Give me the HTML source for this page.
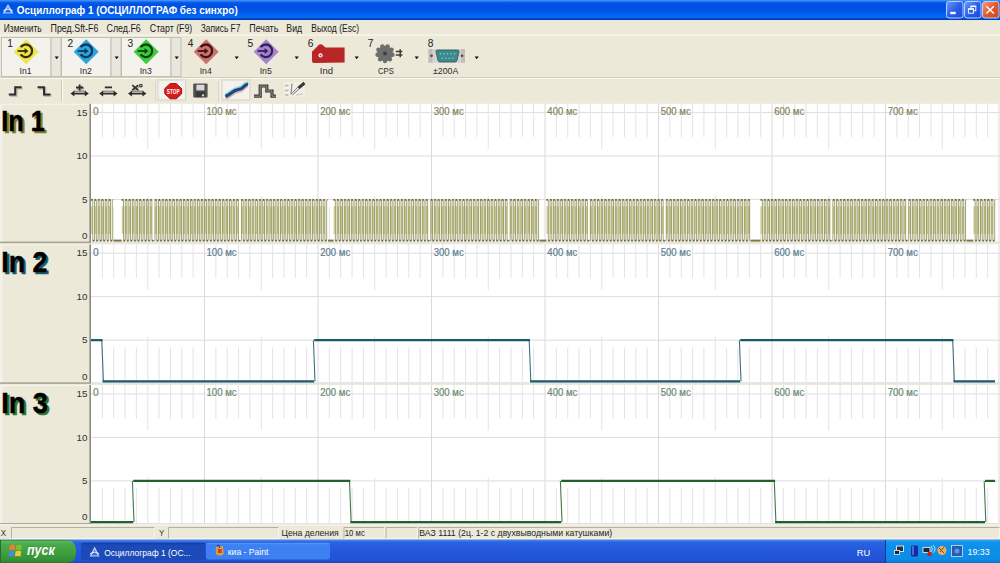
<!DOCTYPE html><html><head><meta charset="utf-8"><style>*{margin:0;padding:0}html,body{width:1000px;height:563px;overflow:hidden;background:#ece9d8}svg{display:block;font-family:"Liberation Sans",sans-serif}</style></head><body>
<svg width="1000" height="563" viewBox="0 0 1000 563">
<defs>
<linearGradient id="gTitle" x1="0" y1="0" x2="0" y2="20" gradientUnits="userSpaceOnUse">
<stop offset="0" stop-color="#4a9cff"/><stop offset="0.06" stop-color="#2a7af5"/><stop offset="0.14" stop-color="#0058e6"/>
<stop offset="0.3" stop-color="#0050e0"/><stop offset="0.55" stop-color="#0055e5"/><stop offset="0.72" stop-color="#0062f4"/>
<stop offset="0.87" stop-color="#066af2"/><stop offset="0.93" stop-color="#0048c4"/><stop offset="1" stop-color="#0038a8"/>
</linearGradient>
<linearGradient id="gBtn" x1="0" y1="0" x2="1" y2="1"><stop offset="0" stop-color="#6a9cff"/><stop offset="0.5" stop-color="#2c5ee8"/><stop offset="1" stop-color="#1c4cd4"/></linearGradient>
<linearGradient id="gClose" x1="0" y1="0" x2="1" y2="1"><stop offset="0" stop-color="#f4a080"/><stop offset="0.5" stop-color="#e2582e"/><stop offset="1" stop-color="#c84820"/></linearGradient>
<linearGradient id="gTask" x1="0" y1="540" x2="0" y2="563" gradientUnits="userSpaceOnUse">
<stop offset="0" stop-color="#4a88f0"/><stop offset="0.1" stop-color="#2a62e0"/><stop offset="0.5" stop-color="#2458dc"/><stop offset="0.9" stop-color="#2052d4"/><stop offset="1" stop-color="#1a44b8"/>
</linearGradient>
<linearGradient id="gStart" x1="0" y1="540" x2="0" y2="563" gradientUnits="userSpaceOnUse">
<stop offset="0" stop-color="#3a7a3a"/><stop offset="0.06" stop-color="#5aba5a"/><stop offset="0.2" stop-color="#48aa48"/><stop offset="0.6" stop-color="#3c9e3c"/><stop offset="0.9" stop-color="#348e34"/><stop offset="1" stop-color="#2a7a2a"/>
</linearGradient>
<linearGradient id="gTray" x1="0" y1="540" x2="0" y2="563" gradientUnits="userSpaceOnUse">
<stop offset="0" stop-color="#2aa8f4"/><stop offset="0.12" stop-color="#0e92ea"/><stop offset="0.85" stop-color="#0c8ce6"/><stop offset="1" stop-color="#0a72cc"/>
</linearGradient>
<filter id="sh" x="-20%" y="-20%" width="140%" height="140%"><feGaussianBlur stdDeviation="0.6"/></filter>
</defs>
<rect x="0" y="0" width="1000" height="563" fill="#ece9d8"/>
<rect x="0" y="0" width="1000" height="20" fill="url(#gTitle)"/>
<rect x="0" y="20" width="1000" height="1" fill="#e2e6e8"/>
<g transform="translate(2.5 3.5)"><path d="M5.5 0.5 L11 10 L0 10Z" fill="#c8dcff" opacity="0.9"/><path d="M5.5 3.5 L8.5 9 L2.5 9Z" fill="#2a68e0"/><path d="M1 7 Q5.5 4 10 7" fill="none" stroke="#e8f0ff" stroke-width="1"/></g>
<text transform="translate(16.81 13.80) scale(0.9022 1)" font-size="11" font-weight="bold" font-style="normal" fill="#ffffff" >Осциллограф 1 (ОСЦИЛЛОГРАФ без синхро)</text>
<rect x="946.5" y="1.5" width="16.5" height="16.5" rx="2.5" fill="url(#gBtn)" stroke="#b4d0ff" stroke-width="1"/>
<rect x="964.5" y="1.5" width="16.5" height="16.5" rx="2.5" fill="url(#gBtn)" stroke="#b4d0ff" stroke-width="1"/>
<rect x="982.5" y="1.5" width="16.5" height="16.5" rx="2.5" fill="url(#gClose)" stroke="#b4d0ff" stroke-width="1"/>
<rect x="950.3" y="11.8" width="5.4" height="2.4" fill="#fff"/>
<rect x="971" y="6.2" width="4.8" height="4.6" fill="none" stroke="#fff" stroke-width="0.9"/><rect x="970.6" y="5.7" width="5.6" height="1.4" fill="#fff"/>
<rect x="968.4" y="8.8" width="5" height="4.4" fill="#2c5ee8" stroke="#fff" stroke-width="0.9"/><rect x="968" y="8.4" width="5.8" height="1.4" fill="#fff"/>
<path d="M986.3 6.2 L993.9 13.5 M993.9 6.2 L986.3 13.5" stroke="#fff" stroke-width="1.5"/>
<text transform="translate(3.82 31.80) scale(0.8410 1)" font-size="10" font-weight="normal" font-style="normal" fill="#1a1a1a" >Изменить</text>
<text transform="translate(50.58 31.80) scale(0.8864 1)" font-size="10" font-weight="normal" font-style="normal" fill="#1a1a1a" >Пред.Sft-F6</text>
<text transform="translate(106.56 31.80) scale(0.8848 1)" font-size="10" font-weight="normal" font-style="normal" fill="#1a1a1a" >След.F6</text>
<text transform="translate(149.86 31.80) scale(0.8785 1)" font-size="10" font-weight="normal" font-style="normal" fill="#1a1a1a" >Старт (F9)</text>
<text transform="translate(200.74 31.80) scale(0.8398 1)" font-size="10" font-weight="normal" font-style="normal" fill="#1a1a1a" >Запись F7</text>
<text transform="translate(249.28 31.80) scale(0.8871 1)" font-size="10" font-weight="normal" font-style="normal" fill="#1a1a1a" >Печать</text>
<text transform="translate(286.29 31.80) scale(0.8759 1)" font-size="10" font-weight="normal" font-style="normal" fill="#1a1a1a" >Вид</text>
<text transform="translate(311.31 31.80) scale(0.8522 1)" font-size="10" font-weight="normal" font-style="normal" fill="#1a1a1a" >Выход (Esc)</text>
<rect x="0" y="34.5" width="1000" height="1" fill="#fbfaf4"/>
<rect x="0" y="77" width="1000" height="1" fill="#d2cfbf"/>
<rect x="0" y="78" width="1000" height="1" fill="#f8f7f0"/>
<rect x="1.5" y="37.5" width="49.5" height="39" fill="#f3f2ec" stroke="#c2bfb0" stroke-width="1"/>
<rect x="51" y="37.5" width="10" height="39" fill="#e9e7dd" stroke="#c2bfb0" stroke-width="1"/>
<text x="7.15" y="47.00" font-size="10.2" font-weight="normal" font-style="normal" fill="#222" >1</text>
<text transform="translate(19.50 73.80) scale(0.9898 1)" font-size="8.8" font-weight="normal" font-style="normal" fill="#2a2a2a" >In1</text>
<path d="M54.6 56.6 L58.8 56.6 L56.7 59.2Z" fill="#111"/>
<path d="M26.2 39.3 L38.7 51.8 L26.2 64.3 L13.7 51.8Z" fill="#ece654"/>
<path d="M20.64 47.19 A6.3 6.3 0 1 1 20.64 54.41" fill="none" stroke="#3a3200" stroke-width="2.3"/>
<path d="M17.60 51.00 L26.40 51.00" stroke="#3a3200" stroke-width="1.8"/>
<path d="M24.60 48.00 L28.40 51.00 L24.60 54.00Z" fill="#3a3200"/>
<rect x="61.5" y="37.5" width="49.5" height="39" fill="#f3f2ec" stroke="#c2bfb0" stroke-width="1"/>
<rect x="111" y="37.5" width="10" height="39" fill="#e9e7dd" stroke="#c2bfb0" stroke-width="1"/>
<text x="67.40" y="47.00" font-size="10.2" font-weight="normal" font-style="normal" fill="#222" >2</text>
<text transform="translate(79.79 73.80) scale(0.9909 1)" font-size="8.8" font-weight="normal" font-style="normal" fill="#2a2a2a" >In2</text>
<path d="M114.6 56.6 L118.8 56.6 L116.7 59.2Z" fill="#111"/>
<path d="M86.2 39.3 L98.7 51.8 L86.2 64.3 L73.7 51.8Z" fill="#2aa4dc"/>
<path d="M80.64 47.19 A6.3 6.3 0 1 1 80.64 54.41" fill="none" stroke="#0c3654" stroke-width="2.3"/>
<path d="M77.60 51.00 L86.40 51.00" stroke="#0c3654" stroke-width="1.8"/>
<path d="M84.60 48.00 L88.40 51.00 L84.60 54.00Z" fill="#0c3654"/>
<rect x="121.5" y="37.5" width="49.5" height="39" fill="#f3f2ec" stroke="#c2bfb0" stroke-width="1"/>
<rect x="171" y="37.5" width="10" height="39" fill="#e9e7dd" stroke="#c2bfb0" stroke-width="1"/>
<text x="127.53" y="47.00" font-size="10.2" font-weight="normal" font-style="normal" fill="#222" >3</text>
<text transform="translate(139.69 73.80) scale(0.9944 1)" font-size="8.8" font-weight="normal" font-style="normal" fill="#2a2a2a" >In3</text>
<path d="M174.6 56.6 L178.8 56.6 L176.7 59.2Z" fill="#111"/>
<path d="M146.2 39.3 L158.7 51.8 L146.2 64.3 L133.7 51.8Z" fill="#3ecc3e"/>
<path d="M140.64 47.19 A6.3 6.3 0 1 1 140.64 54.41" fill="none" stroke="#0c420c" stroke-width="2.3"/>
<path d="M137.60 51.00 L146.40 51.00" stroke="#0c420c" stroke-width="1.8"/>
<path d="M144.60 48.00 L148.40 51.00 L144.60 54.00Z" fill="#0c420c"/>
<text x="187.65" y="47.00" font-size="10.2" font-weight="normal" font-style="normal" fill="#222" >4</text>
<text transform="translate(199.70 73.80) scale(0.9832 1)" font-size="8.8" font-weight="normal" font-style="normal" fill="#2a2a2a" >In4</text>
<path d="M234.6 56.6 L238.8 56.6 L236.7 59.2Z" fill="#111"/>
<path d="M206.2 39.3 L218.7 51.8 L206.2 64.3 L193.7 51.8Z" fill="#cc7070"/>
<path d="M200.64 47.19 A6.3 6.3 0 1 1 200.64 54.41" fill="none" stroke="#3c1414" stroke-width="2.3"/>
<path d="M197.60 51.00 L206.40 51.00" stroke="#3c1414" stroke-width="1.8"/>
<path d="M204.60 48.00 L208.40 51.00 L204.60 54.00Z" fill="#3c1414"/>
<text x="247.46" y="47.00" font-size="10.2" font-weight="normal" font-style="normal" fill="#222" >5</text>
<text transform="translate(259.70 73.80) scale(0.9888 1)" font-size="8.8" font-weight="normal" font-style="normal" fill="#2a2a2a" >In5</text>
<path d="M294.6 56.6 L298.8 56.6 L296.7 59.2Z" fill="#111"/>
<path d="M266.2 39.3 L278.7 51.8 L266.2 64.3 L253.7 51.8Z" fill="#a484cc"/>
<path d="M260.64 47.19 A6.3 6.3 0 1 1 260.64 54.41" fill="none" stroke="#34205a" stroke-width="2.3"/>
<path d="M257.60 51.00 L266.40 51.00" stroke="#34205a" stroke-width="1.8"/>
<path d="M264.60 48.00 L268.40 51.00 L264.60 54.00Z" fill="#34205a"/>
<text x="307.70" y="47.00" font-size="10.2" font-weight="normal" font-style="normal" fill="#222" >6</text>
<text transform="translate(319.83 73.80) scale(1.0759 1)" font-size="8.8" font-weight="normal" font-style="normal" fill="#2a2a2a" >Ind</text>
<path d="M354.6 56.6 L358.8 56.6 L356.7 59.2Z" fill="#111"/>
<text x="367.70" y="47.00" font-size="10.2" font-weight="normal" font-style="normal" fill="#222" >7</text>
<text transform="translate(377.91 73.80) scale(0.8838 1)" font-size="8.8" font-weight="normal" font-style="normal" fill="#2a2a2a" >CPS</text>
<path d="M414.6 56.6 L418.8 56.6 L416.7 59.2Z" fill="#111"/>
<text x="427.76" y="47.00" font-size="10.2" font-weight="normal" font-style="normal" fill="#222" >8</text>
<text x="432.95" y="73.80" font-size="8.8" font-weight="normal" font-style="normal" fill="#2a2a2a" >±200A</text>
<path d="M474.6 56.6 L478.8 56.6 L476.7 59.2Z" fill="#111"/>
<path d="M312 51.5 L318.5 45 Q320 43.8 322 44.6 L325.5 47.6 L344.6 47.6 L344.6 62.5 L314 63 Q312 63 312 61Z" fill="#b82626"/>
<path d="M312.5 51.5 L318.5 45.5" stroke="#e06060" stroke-width="0.8"/>
<circle cx="320.5" cy="55.4" r="2.1" fill="#fff"/><circle cx="320.5" cy="55.4" r="1" fill="#c04040"/>
<g fill="#6e6e6e"><circle cx="385" cy="53.5" r="7.8"/><circle cx="392.48" cy="54.82" r="2.2"/><circle cx="389.89" cy="59.32" r="2.2"/><circle cx="385.00" cy="61.10" r="2.2"/><circle cx="380.11" cy="59.32" r="2.2"/><circle cx="377.52" cy="54.82" r="2.2"/><circle cx="378.42" cy="49.70" r="2.2"/><circle cx="382.40" cy="46.36" r="2.2"/><circle cx="387.60" cy="46.36" r="2.2"/><circle cx="391.58" cy="49.70" r="2.2"/></g><circle cx="385" cy="53.5" r="2.2" fill="#505050"/><circle cx="385" cy="53.5" r="0.9" fill="#2a2a2a"/>
<path d="M395.8 51.6 L402.4 51.6 M395.8 55 L402.4 55 M400.2 49.2 L400.2 57.2" stroke="#3a3a3a" stroke-width="1.5"/>
<rect x="428.5" y="49" width="36.5" height="13.7" fill="#d6d2d2"/>
<rect x="428.5" y="49" width="4" height="13.7" fill="#c4bcbc"/><rect x="461" y="49" width="4" height="13.7" fill="#c4bcbc"/>
<path d="M437.5 50 L457.5 50 Q459.5 50 459 52 L457 60.5 Q456.5 62 455 62 L440 62 Q438.5 62 438 60.5 L436 52 Q435.5 50 437.5 50Z" fill="#3c8a8c" stroke="#2a5a5c" stroke-width="0.8"/>
<circle cx="440.50" cy="53.8" r="0.8" fill="#8ccaca"/>
<circle cx="444.00" cy="53.8" r="0.8" fill="#8ccaca"/>
<circle cx="447.50" cy="53.8" r="0.8" fill="#8ccaca"/>
<circle cx="451.00" cy="53.8" r="0.8" fill="#8ccaca"/>
<circle cx="454.50" cy="53.8" r="0.8" fill="#8ccaca"/>
<circle cx="442.30" cy="58.2" r="0.8" fill="#8ccaca"/>
<circle cx="445.80" cy="58.2" r="0.8" fill="#8ccaca"/>
<circle cx="449.30" cy="58.2" r="0.8" fill="#8ccaca"/>
<circle cx="452.80" cy="58.2" r="0.8" fill="#8ccaca"/>
<circle cx="431.5" cy="55.8" r="1.4" fill="#505050"/><circle cx="462" cy="55.8" r="1.4" fill="#505050"/>
<path d="M8.8 94.4 L15.2 94.4 L15.2 87.2 L21.6 87.2" fill="none" stroke="#9a9890" stroke-width="2.6" transform="translate(1 1)" filter="url(#sh)" opacity="0.7"/>
<path d="M8.8 94.4 L15.2 94.4 L15.2 87.2 L21.6 87.2" fill="none" stroke="#2e2e2e" stroke-width="2"/>
<path d="M37.6 87.2 L44 87.2 L44 94.4 L50.4 94.4" fill="none" stroke="#9a9890" stroke-width="2.6" transform="translate(1 1)" filter="url(#sh)" opacity="0.7"/>
<path d="M37.6 87.2 L44 87.2 L44 94.4 L50.4 94.4" fill="none" stroke="#2e2e2e" stroke-width="2"/>
<rect x="61.1" y="80.5" width="1" height="21" fill="#c9c6b6"/><rect x="62.1" y="80.5" width="1" height="21" fill="#fdfcf6"/>
<rect x="155.5" y="80.5" width="1" height="21" fill="#c9c6b6"/><rect x="156.5" y="80.5" width="1" height="21" fill="#fdfcf6"/>
<path d="M73.4 91.2 L85.80000000000001 91.2" stroke="#707070" stroke-width="1"/>
<path d="M72.9 93.6 L86.30000000000001 93.6" fill="none" stroke="#9a9890" stroke-width="2.4" transform="translate(1 1)" filter="url(#sh)" opacity="0.7"/>
<path d="M72.9 93.6 L86.30000000000001 93.6" fill="none" stroke="#2e2e2e" stroke-width="1.8"/>
<path d="M70.4 93.6 L74.4 90.8 L74.4 96.4Z M88.80000000000001 93.6 L84.80000000000001 90.8 L84.80000000000001 96.4Z" fill="#2a2a2a"/>
<path d="M79.60000000000001 84.6 L79.60000000000001 90.4 M76.00000000000001 87.5 L83.2 87.5" fill="none" stroke="#9a9890" stroke-width="2.4" transform="translate(1 1)" filter="url(#sh)" opacity="0.7"/>
<path d="M79.60000000000001 84.6 L79.60000000000001 90.4 M76.00000000000001 87.5 L83.2 87.5" fill="none" stroke="#2e2e2e" stroke-width="1.8"/>
<path d="M102.2 91.2 L114.60000000000001 91.2" stroke="#707070" stroke-width="1"/>
<path d="M101.7 93.6 L115.10000000000001 93.6" fill="none" stroke="#9a9890" stroke-width="2.4" transform="translate(1 1)" filter="url(#sh)" opacity="0.7"/>
<path d="M101.7 93.6 L115.10000000000001 93.6" fill="none" stroke="#2e2e2e" stroke-width="1.8"/>
<path d="M99.2 93.6 L103.2 90.8 L103.2 96.4Z M117.6 93.6 L113.60000000000001 90.8 L113.60000000000001 96.4Z" fill="#2a2a2a"/>
<path d="M104.80000000000001 87.4 L112.0 87.4" fill="none" stroke="#9a9890" stroke-width="2.4" transform="translate(1 1)" filter="url(#sh)" opacity="0.7"/>
<path d="M104.80000000000001 87.4 L112.0 87.4" fill="none" stroke="#2e2e2e" stroke-width="1.8"/>
<path d="M131 91.2 L143.4 91.2" stroke="#707070" stroke-width="1"/>
<path d="M130.5 93.6 L143.9 93.6" fill="none" stroke="#9a9890" stroke-width="2.4" transform="translate(1 1)" filter="url(#sh)" opacity="0.7"/>
<path d="M130.5 93.6 L143.9 93.6" fill="none" stroke="#2e2e2e" stroke-width="1.8"/>
<path d="M128 93.6 L132 90.8 L132 96.4Z M146.4 93.6 L142.4 90.8 L142.4 96.4Z" fill="#2a2a2a"/>
<path d="M132.2 85.2 L138.2 90.2 M138.2 85.2 L132.2 90.2" fill="none" stroke="#9a9890" stroke-width="2.1" transform="translate(1 1)" filter="url(#sh)" opacity="0.7"/>
<path d="M132.2 85.2 L138.2 90.2 M138.2 85.2 L132.2 90.2" fill="none" stroke="#2e2e2e" stroke-width="1.5"/>
<circle cx="140.9" cy="85.6" r="1.3" fill="none" stroke="#2e2e2e" stroke-width="1.1"/>
<rect x="158" y="80" width="27.6" height="20" fill="#f3f2ec" stroke="#d4d1c4" stroke-width="1"/>
<path d="M170.2 83.6 L176.2 83.6 L181.6 88.6 L181.6 93.8 L176.2 98.8 L170.2 98.8 L164.8 93.8 L164.8 88.6Z" fill="#d81c1c" stroke="#a81010" stroke-width="1" stroke-linejoin="round"/>
<text transform="translate(173.2 94.2) scale(0.62 1)" font-size="7.6" font-weight="bold" fill="#fff" text-anchor="middle">STOP</text>
<rect x="193.2" y="83.6" width="14.4" height="14" rx="1" fill="#525252"/><rect x="196.4" y="84.8" width="8" height="5.6" fill="#d8d8d8"/><rect x="195.6" y="91.6" width="9.6" height="5.6" fill="#3a3a3a"/><rect x="202" y="94.4" width="2" height="2" fill="#e0e0e0"/>
<rect x="218.5" y="80.5" width="1" height="21" fill="#c9c6b6"/><rect x="219.5" y="80.5" width="1" height="21" fill="#fdfcf6"/>
<rect x="222" y="80" width="28" height="20" fill="#f3f2ec" stroke="#d4d1c4" stroke-width="1"/>
<path d="M225.5 96.5 Q229 95 232 92.5 T238.5 89.5 T244 86.5 T248 84.5" fill="none" stroke="#e0b0c0" stroke-width="4.4" transform="translate(0 1.2)"/>
<path d="M225.5 96.5 Q229 95 232 92.5 T238.5 89.5 T244 86.5 T248 84.5" fill="none" stroke="#8ccce0" stroke-width="4.4" transform="translate(0 -0.8)"/>
<path d="M225.5 96.5 Q229 95 232 92.5 T238.5 89.5 T244 86.5 T248 84.5" fill="none" stroke="#1c4a78" stroke-width="3"/>
<path d="M254 96.2 L260.2 96.2 L260.2 86 L266.8 86 L266.8 91 L272 91 L272 96.2 L276 96.2" fill="none" stroke="#3a3a3a" stroke-width="3.2" stroke-linejoin="miter"/>
<path d="M254 96.2 L260.2 96.2 L260.2 86 L266.8 86 L266.8 91 L272 91 L272 96.2 L276 96.2" fill="none" stroke="#a8a69a" stroke-width="0.8"/>
<rect x="284.5" y="82" width="20.5" height="14.5" fill="#f2f1ec" opacity="0.8"/>
<path d="M285 85.5 L288.5 85.5 M285 90.5 L288.5 90.5 M285 95 L288.5 95" stroke="#b4b4b0" stroke-width="1.3"/>
<path d="M292 83.5 L291 94.5" stroke="#8a8a88" stroke-width="1.2"/>
<path d="M291.2 94 L298.5 86.5 M292.5 95 L300 88" stroke="#6a6a6a" stroke-width="0.9"/>
<path d="M298.5 88 L304.5 83" stroke="#3a3a3a" stroke-width="3"/>
<path d="M296 95 L303 94" stroke="#c0c0bc" stroke-width="1"/>
<rect x="91" y="103.8" width="909" height="137.8" fill="#ffffff"/>
<rect x="0" y="103.8" width="89.4" height="1" fill="#f6f5ee"/>
<rect x="0" y="103.8" width="2.5" height="137.8" fill="#f3f2ea"/>
<rect x="0" y="241.6" width="91" height="1.5" fill="#a4a294"/>
<rect x="91" y="241.6" width="909" height="1.5" fill="#e4e2e8"/>
<rect x="91" y="111.90" width="909" height="1" fill="#dcdce2"/>
<rect x="91" y="155.40" width="909" height="1" fill="#dcdce2"/>
<rect x="91" y="198.90" width="909" height="1" fill="#dcdce2"/>
<rect x="101.85" y="103.8" width="1" height="33.40" fill="#e3e3e8"/>
<rect x="101.85" y="206.60" width="1" height="35.00" fill="#e3e3e8"/>
<rect x="113.20" y="103.8" width="1" height="33.40" fill="#e3e3e8"/>
<rect x="113.20" y="206.60" width="1" height="35.00" fill="#e3e3e8"/>
<rect x="124.55" y="103.8" width="1" height="33.40" fill="#e3e3e8"/>
<rect x="124.55" y="206.60" width="1" height="35.00" fill="#e3e3e8"/>
<rect x="135.90" y="103.8" width="1" height="33.40" fill="#e3e3e8"/>
<rect x="135.90" y="206.60" width="1" height="35.00" fill="#e3e3e8"/>
<rect x="147.25" y="103.8" width="1" height="45.20" fill="#e3e3e8"/>
<rect x="147.25" y="195.90" width="1" height="45.70" fill="#e3e3e8"/>
<rect x="158.60" y="103.8" width="1" height="33.40" fill="#e3e3e8"/>
<rect x="158.60" y="206.60" width="1" height="35.00" fill="#e3e3e8"/>
<rect x="169.95" y="103.8" width="1" height="33.40" fill="#e3e3e8"/>
<rect x="169.95" y="206.60" width="1" height="35.00" fill="#e3e3e8"/>
<rect x="181.30" y="103.8" width="1" height="33.40" fill="#e3e3e8"/>
<rect x="181.30" y="206.60" width="1" height="35.00" fill="#e3e3e8"/>
<rect x="192.65" y="103.8" width="1" height="33.40" fill="#e3e3e8"/>
<rect x="192.65" y="206.60" width="1" height="35.00" fill="#e3e3e8"/>
<rect x="204.00" y="103.8" width="1" height="137.80" fill="#d9d9df"/>
<rect x="215.35" y="103.8" width="1" height="33.40" fill="#e3e3e8"/>
<rect x="215.35" y="206.60" width="1" height="35.00" fill="#e3e3e8"/>
<rect x="226.70" y="103.8" width="1" height="33.40" fill="#e3e3e8"/>
<rect x="226.70" y="206.60" width="1" height="35.00" fill="#e3e3e8"/>
<rect x="238.05" y="103.8" width="1" height="33.40" fill="#e3e3e8"/>
<rect x="238.05" y="206.60" width="1" height="35.00" fill="#e3e3e8"/>
<rect x="249.40" y="103.8" width="1" height="33.40" fill="#e3e3e8"/>
<rect x="249.40" y="206.60" width="1" height="35.00" fill="#e3e3e8"/>
<rect x="260.75" y="103.8" width="1" height="45.20" fill="#e3e3e8"/>
<rect x="260.75" y="195.90" width="1" height="45.70" fill="#e3e3e8"/>
<rect x="272.10" y="103.8" width="1" height="33.40" fill="#e3e3e8"/>
<rect x="272.10" y="206.60" width="1" height="35.00" fill="#e3e3e8"/>
<rect x="283.45" y="103.8" width="1" height="33.40" fill="#e3e3e8"/>
<rect x="283.45" y="206.60" width="1" height="35.00" fill="#e3e3e8"/>
<rect x="294.80" y="103.8" width="1" height="33.40" fill="#e3e3e8"/>
<rect x="294.80" y="206.60" width="1" height="35.00" fill="#e3e3e8"/>
<rect x="306.15" y="103.8" width="1" height="33.40" fill="#e3e3e8"/>
<rect x="306.15" y="206.60" width="1" height="35.00" fill="#e3e3e8"/>
<rect x="317.50" y="103.8" width="1" height="137.80" fill="#d9d9df"/>
<rect x="328.85" y="103.8" width="1" height="33.40" fill="#e3e3e8"/>
<rect x="328.85" y="206.60" width="1" height="35.00" fill="#e3e3e8"/>
<rect x="340.20" y="103.8" width="1" height="33.40" fill="#e3e3e8"/>
<rect x="340.20" y="206.60" width="1" height="35.00" fill="#e3e3e8"/>
<rect x="351.55" y="103.8" width="1" height="33.40" fill="#e3e3e8"/>
<rect x="351.55" y="206.60" width="1" height="35.00" fill="#e3e3e8"/>
<rect x="362.90" y="103.8" width="1" height="33.40" fill="#e3e3e8"/>
<rect x="362.90" y="206.60" width="1" height="35.00" fill="#e3e3e8"/>
<rect x="374.25" y="103.8" width="1" height="45.20" fill="#e3e3e8"/>
<rect x="374.25" y="195.90" width="1" height="45.70" fill="#e3e3e8"/>
<rect x="385.60" y="103.8" width="1" height="33.40" fill="#e3e3e8"/>
<rect x="385.60" y="206.60" width="1" height="35.00" fill="#e3e3e8"/>
<rect x="396.95" y="103.8" width="1" height="33.40" fill="#e3e3e8"/>
<rect x="396.95" y="206.60" width="1" height="35.00" fill="#e3e3e8"/>
<rect x="408.30" y="103.8" width="1" height="33.40" fill="#e3e3e8"/>
<rect x="408.30" y="206.60" width="1" height="35.00" fill="#e3e3e8"/>
<rect x="419.65" y="103.8" width="1" height="33.40" fill="#e3e3e8"/>
<rect x="419.65" y="206.60" width="1" height="35.00" fill="#e3e3e8"/>
<rect x="431.00" y="103.8" width="1" height="137.80" fill="#d9d9df"/>
<rect x="442.35" y="103.8" width="1" height="33.40" fill="#e3e3e8"/>
<rect x="442.35" y="206.60" width="1" height="35.00" fill="#e3e3e8"/>
<rect x="453.70" y="103.8" width="1" height="33.40" fill="#e3e3e8"/>
<rect x="453.70" y="206.60" width="1" height="35.00" fill="#e3e3e8"/>
<rect x="465.05" y="103.8" width="1" height="33.40" fill="#e3e3e8"/>
<rect x="465.05" y="206.60" width="1" height="35.00" fill="#e3e3e8"/>
<rect x="476.40" y="103.8" width="1" height="33.40" fill="#e3e3e8"/>
<rect x="476.40" y="206.60" width="1" height="35.00" fill="#e3e3e8"/>
<rect x="487.75" y="103.8" width="1" height="45.20" fill="#e3e3e8"/>
<rect x="487.75" y="195.90" width="1" height="45.70" fill="#e3e3e8"/>
<rect x="499.10" y="103.8" width="1" height="33.40" fill="#e3e3e8"/>
<rect x="499.10" y="206.60" width="1" height="35.00" fill="#e3e3e8"/>
<rect x="510.45" y="103.8" width="1" height="33.40" fill="#e3e3e8"/>
<rect x="510.45" y="206.60" width="1" height="35.00" fill="#e3e3e8"/>
<rect x="521.80" y="103.8" width="1" height="33.40" fill="#e3e3e8"/>
<rect x="521.80" y="206.60" width="1" height="35.00" fill="#e3e3e8"/>
<rect x="533.15" y="103.8" width="1" height="33.40" fill="#e3e3e8"/>
<rect x="533.15" y="206.60" width="1" height="35.00" fill="#e3e3e8"/>
<rect x="544.50" y="103.8" width="1" height="137.80" fill="#d9d9df"/>
<rect x="555.85" y="103.8" width="1" height="33.40" fill="#e3e3e8"/>
<rect x="555.85" y="206.60" width="1" height="35.00" fill="#e3e3e8"/>
<rect x="567.20" y="103.8" width="1" height="33.40" fill="#e3e3e8"/>
<rect x="567.20" y="206.60" width="1" height="35.00" fill="#e3e3e8"/>
<rect x="578.55" y="103.8" width="1" height="33.40" fill="#e3e3e8"/>
<rect x="578.55" y="206.60" width="1" height="35.00" fill="#e3e3e8"/>
<rect x="589.90" y="103.8" width="1" height="33.40" fill="#e3e3e8"/>
<rect x="589.90" y="206.60" width="1" height="35.00" fill="#e3e3e8"/>
<rect x="601.25" y="103.8" width="1" height="45.20" fill="#e3e3e8"/>
<rect x="601.25" y="195.90" width="1" height="45.70" fill="#e3e3e8"/>
<rect x="612.60" y="103.8" width="1" height="33.40" fill="#e3e3e8"/>
<rect x="612.60" y="206.60" width="1" height="35.00" fill="#e3e3e8"/>
<rect x="623.95" y="103.8" width="1" height="33.40" fill="#e3e3e8"/>
<rect x="623.95" y="206.60" width="1" height="35.00" fill="#e3e3e8"/>
<rect x="635.30" y="103.8" width="1" height="33.40" fill="#e3e3e8"/>
<rect x="635.30" y="206.60" width="1" height="35.00" fill="#e3e3e8"/>
<rect x="646.65" y="103.8" width="1" height="33.40" fill="#e3e3e8"/>
<rect x="646.65" y="206.60" width="1" height="35.00" fill="#e3e3e8"/>
<rect x="658.00" y="103.8" width="1" height="137.80" fill="#d9d9df"/>
<rect x="669.35" y="103.8" width="1" height="33.40" fill="#e3e3e8"/>
<rect x="669.35" y="206.60" width="1" height="35.00" fill="#e3e3e8"/>
<rect x="680.70" y="103.8" width="1" height="33.40" fill="#e3e3e8"/>
<rect x="680.70" y="206.60" width="1" height="35.00" fill="#e3e3e8"/>
<rect x="692.05" y="103.8" width="1" height="33.40" fill="#e3e3e8"/>
<rect x="692.05" y="206.60" width="1" height="35.00" fill="#e3e3e8"/>
<rect x="703.40" y="103.8" width="1" height="33.40" fill="#e3e3e8"/>
<rect x="703.40" y="206.60" width="1" height="35.00" fill="#e3e3e8"/>
<rect x="714.75" y="103.8" width="1" height="45.20" fill="#e3e3e8"/>
<rect x="714.75" y="195.90" width="1" height="45.70" fill="#e3e3e8"/>
<rect x="726.10" y="103.8" width="1" height="33.40" fill="#e3e3e8"/>
<rect x="726.10" y="206.60" width="1" height="35.00" fill="#e3e3e8"/>
<rect x="737.45" y="103.8" width="1" height="33.40" fill="#e3e3e8"/>
<rect x="737.45" y="206.60" width="1" height="35.00" fill="#e3e3e8"/>
<rect x="748.80" y="103.8" width="1" height="33.40" fill="#e3e3e8"/>
<rect x="748.80" y="206.60" width="1" height="35.00" fill="#e3e3e8"/>
<rect x="760.15" y="103.8" width="1" height="33.40" fill="#e3e3e8"/>
<rect x="760.15" y="206.60" width="1" height="35.00" fill="#e3e3e8"/>
<rect x="771.50" y="103.8" width="1" height="137.80" fill="#d9d9df"/>
<rect x="782.85" y="103.8" width="1" height="33.40" fill="#e3e3e8"/>
<rect x="782.85" y="206.60" width="1" height="35.00" fill="#e3e3e8"/>
<rect x="794.20" y="103.8" width="1" height="33.40" fill="#e3e3e8"/>
<rect x="794.20" y="206.60" width="1" height="35.00" fill="#e3e3e8"/>
<rect x="805.55" y="103.8" width="1" height="33.40" fill="#e3e3e8"/>
<rect x="805.55" y="206.60" width="1" height="35.00" fill="#e3e3e8"/>
<rect x="816.90" y="103.8" width="1" height="33.40" fill="#e3e3e8"/>
<rect x="816.90" y="206.60" width="1" height="35.00" fill="#e3e3e8"/>
<rect x="828.25" y="103.8" width="1" height="45.20" fill="#e3e3e8"/>
<rect x="828.25" y="195.90" width="1" height="45.70" fill="#e3e3e8"/>
<rect x="839.60" y="103.8" width="1" height="33.40" fill="#e3e3e8"/>
<rect x="839.60" y="206.60" width="1" height="35.00" fill="#e3e3e8"/>
<rect x="850.95" y="103.8" width="1" height="33.40" fill="#e3e3e8"/>
<rect x="850.95" y="206.60" width="1" height="35.00" fill="#e3e3e8"/>
<rect x="862.30" y="103.8" width="1" height="33.40" fill="#e3e3e8"/>
<rect x="862.30" y="206.60" width="1" height="35.00" fill="#e3e3e8"/>
<rect x="873.65" y="103.8" width="1" height="33.40" fill="#e3e3e8"/>
<rect x="873.65" y="206.60" width="1" height="35.00" fill="#e3e3e8"/>
<rect x="885.00" y="103.8" width="1" height="137.80" fill="#d9d9df"/>
<rect x="896.35" y="103.8" width="1" height="33.40" fill="#e3e3e8"/>
<rect x="896.35" y="206.60" width="1" height="35.00" fill="#e3e3e8"/>
<rect x="907.70" y="103.8" width="1" height="33.40" fill="#e3e3e8"/>
<rect x="907.70" y="206.60" width="1" height="35.00" fill="#e3e3e8"/>
<rect x="919.05" y="103.8" width="1" height="33.40" fill="#e3e3e8"/>
<rect x="919.05" y="206.60" width="1" height="35.00" fill="#e3e3e8"/>
<rect x="930.40" y="103.8" width="1" height="33.40" fill="#e3e3e8"/>
<rect x="930.40" y="206.60" width="1" height="35.00" fill="#e3e3e8"/>
<rect x="941.75" y="103.8" width="1" height="45.20" fill="#e3e3e8"/>
<rect x="941.75" y="195.90" width="1" height="45.70" fill="#e3e3e8"/>
<rect x="953.10" y="103.8" width="1" height="33.40" fill="#e3e3e8"/>
<rect x="953.10" y="206.60" width="1" height="35.00" fill="#e3e3e8"/>
<rect x="964.45" y="103.8" width="1" height="33.40" fill="#e3e3e8"/>
<rect x="964.45" y="206.60" width="1" height="35.00" fill="#e3e3e8"/>
<rect x="975.80" y="103.8" width="1" height="33.40" fill="#e3e3e8"/>
<rect x="975.80" y="206.60" width="1" height="35.00" fill="#e3e3e8"/>
<rect x="987.15" y="103.8" width="1" height="33.40" fill="#e3e3e8"/>
<rect x="987.15" y="206.60" width="1" height="35.00" fill="#e3e3e8"/>
<rect x="998.50" y="103.8" width="1" height="137.80" fill="#d9d9df"/>
<rect x="89.4" y="103.8" width="1.6" height="138.10" fill="#8c8a80"/>
<text x="76.50" y="115.70" font-size="9.8" font-weight="normal" font-style="normal" fill="#303030" >15</text>
<text x="76.50" y="159.20" font-size="9.8" font-weight="normal" font-style="normal" fill="#303030" >10</text>
<text x="81.94" y="202.70" font-size="9.8" font-weight="normal" font-style="normal" fill="#303030" >5</text>
<text x="81.94" y="238.90" font-size="9.8" font-weight="normal" font-style="normal" fill="#303030" >0</text>
<text x="92.92" y="114.80" font-size="10.2" font-weight="normal" font-style="normal" fill="#84845e" stroke="#84845e" stroke-width="0.2">0</text>
<text transform="translate(206.39 114.80) scale(0.9490 1)" font-size="10.2" font-weight="normal" font-style="normal" fill="#84845e" stroke="#84845e" stroke-width="0.2">100 мс</text>
<text transform="translate(320.13 114.80) scale(0.9414 1)" font-size="10.2" font-weight="normal" font-style="normal" fill="#84845e" stroke="#84845e" stroke-width="0.2">200 мс</text>
<text transform="translate(433.75 114.80) scale(0.9376 1)" font-size="10.2" font-weight="normal" font-style="normal" fill="#84845e" stroke="#84845e" stroke-width="0.2">300 мс</text>
<text transform="translate(547.37 114.80) scale(0.9339 1)" font-size="10.2" font-weight="normal" font-style="normal" fill="#84845e" stroke="#84845e" stroke-width="0.2">400 мс</text>
<text transform="translate(660.69 114.80) scale(0.9395 1)" font-size="10.2" font-weight="normal" font-style="normal" fill="#84845e" stroke="#84845e" stroke-width="0.2">500 мс</text>
<text transform="translate(774.13 114.80) scale(0.9414 1)" font-size="10.2" font-weight="normal" font-style="normal" fill="#84845e" stroke="#84845e" stroke-width="0.2">600 мс</text>
<text transform="translate(887.63 114.80) scale(0.9414 1)" font-size="10.2" font-weight="normal" font-style="normal" fill="#84845e" stroke="#84845e" stroke-width="0.2">700 мс</text>
<g transform="translate(3.55 133.40) scale(0.8531 1)"><text font-size="29.5" font-weight="bold" fill="#7c7c22" stroke="#7c7c22" stroke-width="0.5">In 1</text></g>
<g transform="translate(1.35 131.10) scale(0.8531 1)"><text font-size="29.5" font-weight="bold" fill="#000" stroke="#000" stroke-width="0.5">In 1</text></g>
<rect x="91" y="244.4" width="909" height="137.95000000000002" fill="#ffffff"/>
<rect x="0" y="244.4" width="89.4" height="1" fill="#f6f5ee"/>
<rect x="0" y="244.4" width="2.5" height="137.95000000000002" fill="#f3f2ea"/>
<rect x="0" y="382.35" width="91" height="1.5" fill="#a4a294"/>
<rect x="91" y="382.35" width="909" height="1.5" fill="#e4e2e8"/>
<rect x="91" y="252.65" width="909" height="1" fill="#dcdce2"/>
<rect x="91" y="296.15" width="909" height="1" fill="#dcdce2"/>
<rect x="91" y="339.65" width="909" height="1" fill="#dcdce2"/>
<rect x="101.85" y="244.4" width="1" height="33.55" fill="#e3e3e8"/>
<rect x="101.85" y="347.35" width="1" height="35.00" fill="#e3e3e8"/>
<rect x="113.20" y="244.4" width="1" height="33.55" fill="#e3e3e8"/>
<rect x="113.20" y="347.35" width="1" height="35.00" fill="#e3e3e8"/>
<rect x="124.55" y="244.4" width="1" height="33.55" fill="#e3e3e8"/>
<rect x="124.55" y="347.35" width="1" height="35.00" fill="#e3e3e8"/>
<rect x="135.90" y="244.4" width="1" height="33.55" fill="#e3e3e8"/>
<rect x="135.90" y="347.35" width="1" height="35.00" fill="#e3e3e8"/>
<rect x="147.25" y="244.4" width="1" height="45.35" fill="#e3e3e8"/>
<rect x="147.25" y="336.65" width="1" height="45.70" fill="#e3e3e8"/>
<rect x="158.60" y="244.4" width="1" height="33.55" fill="#e3e3e8"/>
<rect x="158.60" y="347.35" width="1" height="35.00" fill="#e3e3e8"/>
<rect x="169.95" y="244.4" width="1" height="33.55" fill="#e3e3e8"/>
<rect x="169.95" y="347.35" width="1" height="35.00" fill="#e3e3e8"/>
<rect x="181.30" y="244.4" width="1" height="33.55" fill="#e3e3e8"/>
<rect x="181.30" y="347.35" width="1" height="35.00" fill="#e3e3e8"/>
<rect x="192.65" y="244.4" width="1" height="33.55" fill="#e3e3e8"/>
<rect x="192.65" y="347.35" width="1" height="35.00" fill="#e3e3e8"/>
<rect x="204.00" y="244.4" width="1" height="137.95" fill="#d9d9df"/>
<rect x="215.35" y="244.4" width="1" height="33.55" fill="#e3e3e8"/>
<rect x="215.35" y="347.35" width="1" height="35.00" fill="#e3e3e8"/>
<rect x="226.70" y="244.4" width="1" height="33.55" fill="#e3e3e8"/>
<rect x="226.70" y="347.35" width="1" height="35.00" fill="#e3e3e8"/>
<rect x="238.05" y="244.4" width="1" height="33.55" fill="#e3e3e8"/>
<rect x="238.05" y="347.35" width="1" height="35.00" fill="#e3e3e8"/>
<rect x="249.40" y="244.4" width="1" height="33.55" fill="#e3e3e8"/>
<rect x="249.40" y="347.35" width="1" height="35.00" fill="#e3e3e8"/>
<rect x="260.75" y="244.4" width="1" height="45.35" fill="#e3e3e8"/>
<rect x="260.75" y="336.65" width="1" height="45.70" fill="#e3e3e8"/>
<rect x="272.10" y="244.4" width="1" height="33.55" fill="#e3e3e8"/>
<rect x="272.10" y="347.35" width="1" height="35.00" fill="#e3e3e8"/>
<rect x="283.45" y="244.4" width="1" height="33.55" fill="#e3e3e8"/>
<rect x="283.45" y="347.35" width="1" height="35.00" fill="#e3e3e8"/>
<rect x="294.80" y="244.4" width="1" height="33.55" fill="#e3e3e8"/>
<rect x="294.80" y="347.35" width="1" height="35.00" fill="#e3e3e8"/>
<rect x="306.15" y="244.4" width="1" height="33.55" fill="#e3e3e8"/>
<rect x="306.15" y="347.35" width="1" height="35.00" fill="#e3e3e8"/>
<rect x="317.50" y="244.4" width="1" height="137.95" fill="#d9d9df"/>
<rect x="328.85" y="244.4" width="1" height="33.55" fill="#e3e3e8"/>
<rect x="328.85" y="347.35" width="1" height="35.00" fill="#e3e3e8"/>
<rect x="340.20" y="244.4" width="1" height="33.55" fill="#e3e3e8"/>
<rect x="340.20" y="347.35" width="1" height="35.00" fill="#e3e3e8"/>
<rect x="351.55" y="244.4" width="1" height="33.55" fill="#e3e3e8"/>
<rect x="351.55" y="347.35" width="1" height="35.00" fill="#e3e3e8"/>
<rect x="362.90" y="244.4" width="1" height="33.55" fill="#e3e3e8"/>
<rect x="362.90" y="347.35" width="1" height="35.00" fill="#e3e3e8"/>
<rect x="374.25" y="244.4" width="1" height="45.35" fill="#e3e3e8"/>
<rect x="374.25" y="336.65" width="1" height="45.70" fill="#e3e3e8"/>
<rect x="385.60" y="244.4" width="1" height="33.55" fill="#e3e3e8"/>
<rect x="385.60" y="347.35" width="1" height="35.00" fill="#e3e3e8"/>
<rect x="396.95" y="244.4" width="1" height="33.55" fill="#e3e3e8"/>
<rect x="396.95" y="347.35" width="1" height="35.00" fill="#e3e3e8"/>
<rect x="408.30" y="244.4" width="1" height="33.55" fill="#e3e3e8"/>
<rect x="408.30" y="347.35" width="1" height="35.00" fill="#e3e3e8"/>
<rect x="419.65" y="244.4" width="1" height="33.55" fill="#e3e3e8"/>
<rect x="419.65" y="347.35" width="1" height="35.00" fill="#e3e3e8"/>
<rect x="431.00" y="244.4" width="1" height="137.95" fill="#d9d9df"/>
<rect x="442.35" y="244.4" width="1" height="33.55" fill="#e3e3e8"/>
<rect x="442.35" y="347.35" width="1" height="35.00" fill="#e3e3e8"/>
<rect x="453.70" y="244.4" width="1" height="33.55" fill="#e3e3e8"/>
<rect x="453.70" y="347.35" width="1" height="35.00" fill="#e3e3e8"/>
<rect x="465.05" y="244.4" width="1" height="33.55" fill="#e3e3e8"/>
<rect x="465.05" y="347.35" width="1" height="35.00" fill="#e3e3e8"/>
<rect x="476.40" y="244.4" width="1" height="33.55" fill="#e3e3e8"/>
<rect x="476.40" y="347.35" width="1" height="35.00" fill="#e3e3e8"/>
<rect x="487.75" y="244.4" width="1" height="45.35" fill="#e3e3e8"/>
<rect x="487.75" y="336.65" width="1" height="45.70" fill="#e3e3e8"/>
<rect x="499.10" y="244.4" width="1" height="33.55" fill="#e3e3e8"/>
<rect x="499.10" y="347.35" width="1" height="35.00" fill="#e3e3e8"/>
<rect x="510.45" y="244.4" width="1" height="33.55" fill="#e3e3e8"/>
<rect x="510.45" y="347.35" width="1" height="35.00" fill="#e3e3e8"/>
<rect x="521.80" y="244.4" width="1" height="33.55" fill="#e3e3e8"/>
<rect x="521.80" y="347.35" width="1" height="35.00" fill="#e3e3e8"/>
<rect x="533.15" y="244.4" width="1" height="33.55" fill="#e3e3e8"/>
<rect x="533.15" y="347.35" width="1" height="35.00" fill="#e3e3e8"/>
<rect x="544.50" y="244.4" width="1" height="137.95" fill="#d9d9df"/>
<rect x="555.85" y="244.4" width="1" height="33.55" fill="#e3e3e8"/>
<rect x="555.85" y="347.35" width="1" height="35.00" fill="#e3e3e8"/>
<rect x="567.20" y="244.4" width="1" height="33.55" fill="#e3e3e8"/>
<rect x="567.20" y="347.35" width="1" height="35.00" fill="#e3e3e8"/>
<rect x="578.55" y="244.4" width="1" height="33.55" fill="#e3e3e8"/>
<rect x="578.55" y="347.35" width="1" height="35.00" fill="#e3e3e8"/>
<rect x="589.90" y="244.4" width="1" height="33.55" fill="#e3e3e8"/>
<rect x="589.90" y="347.35" width="1" height="35.00" fill="#e3e3e8"/>
<rect x="601.25" y="244.4" width="1" height="45.35" fill="#e3e3e8"/>
<rect x="601.25" y="336.65" width="1" height="45.70" fill="#e3e3e8"/>
<rect x="612.60" y="244.4" width="1" height="33.55" fill="#e3e3e8"/>
<rect x="612.60" y="347.35" width="1" height="35.00" fill="#e3e3e8"/>
<rect x="623.95" y="244.4" width="1" height="33.55" fill="#e3e3e8"/>
<rect x="623.95" y="347.35" width="1" height="35.00" fill="#e3e3e8"/>
<rect x="635.30" y="244.4" width="1" height="33.55" fill="#e3e3e8"/>
<rect x="635.30" y="347.35" width="1" height="35.00" fill="#e3e3e8"/>
<rect x="646.65" y="244.4" width="1" height="33.55" fill="#e3e3e8"/>
<rect x="646.65" y="347.35" width="1" height="35.00" fill="#e3e3e8"/>
<rect x="658.00" y="244.4" width="1" height="137.95" fill="#d9d9df"/>
<rect x="669.35" y="244.4" width="1" height="33.55" fill="#e3e3e8"/>
<rect x="669.35" y="347.35" width="1" height="35.00" fill="#e3e3e8"/>
<rect x="680.70" y="244.4" width="1" height="33.55" fill="#e3e3e8"/>
<rect x="680.70" y="347.35" width="1" height="35.00" fill="#e3e3e8"/>
<rect x="692.05" y="244.4" width="1" height="33.55" fill="#e3e3e8"/>
<rect x="692.05" y="347.35" width="1" height="35.00" fill="#e3e3e8"/>
<rect x="703.40" y="244.4" width="1" height="33.55" fill="#e3e3e8"/>
<rect x="703.40" y="347.35" width="1" height="35.00" fill="#e3e3e8"/>
<rect x="714.75" y="244.4" width="1" height="45.35" fill="#e3e3e8"/>
<rect x="714.75" y="336.65" width="1" height="45.70" fill="#e3e3e8"/>
<rect x="726.10" y="244.4" width="1" height="33.55" fill="#e3e3e8"/>
<rect x="726.10" y="347.35" width="1" height="35.00" fill="#e3e3e8"/>
<rect x="737.45" y="244.4" width="1" height="33.55" fill="#e3e3e8"/>
<rect x="737.45" y="347.35" width="1" height="35.00" fill="#e3e3e8"/>
<rect x="748.80" y="244.4" width="1" height="33.55" fill="#e3e3e8"/>
<rect x="748.80" y="347.35" width="1" height="35.00" fill="#e3e3e8"/>
<rect x="760.15" y="244.4" width="1" height="33.55" fill="#e3e3e8"/>
<rect x="760.15" y="347.35" width="1" height="35.00" fill="#e3e3e8"/>
<rect x="771.50" y="244.4" width="1" height="137.95" fill="#d9d9df"/>
<rect x="782.85" y="244.4" width="1" height="33.55" fill="#e3e3e8"/>
<rect x="782.85" y="347.35" width="1" height="35.00" fill="#e3e3e8"/>
<rect x="794.20" y="244.4" width="1" height="33.55" fill="#e3e3e8"/>
<rect x="794.20" y="347.35" width="1" height="35.00" fill="#e3e3e8"/>
<rect x="805.55" y="244.4" width="1" height="33.55" fill="#e3e3e8"/>
<rect x="805.55" y="347.35" width="1" height="35.00" fill="#e3e3e8"/>
<rect x="816.90" y="244.4" width="1" height="33.55" fill="#e3e3e8"/>
<rect x="816.90" y="347.35" width="1" height="35.00" fill="#e3e3e8"/>
<rect x="828.25" y="244.4" width="1" height="45.35" fill="#e3e3e8"/>
<rect x="828.25" y="336.65" width="1" height="45.70" fill="#e3e3e8"/>
<rect x="839.60" y="244.4" width="1" height="33.55" fill="#e3e3e8"/>
<rect x="839.60" y="347.35" width="1" height="35.00" fill="#e3e3e8"/>
<rect x="850.95" y="244.4" width="1" height="33.55" fill="#e3e3e8"/>
<rect x="850.95" y="347.35" width="1" height="35.00" fill="#e3e3e8"/>
<rect x="862.30" y="244.4" width="1" height="33.55" fill="#e3e3e8"/>
<rect x="862.30" y="347.35" width="1" height="35.00" fill="#e3e3e8"/>
<rect x="873.65" y="244.4" width="1" height="33.55" fill="#e3e3e8"/>
<rect x="873.65" y="347.35" width="1" height="35.00" fill="#e3e3e8"/>
<rect x="885.00" y="244.4" width="1" height="137.95" fill="#d9d9df"/>
<rect x="896.35" y="244.4" width="1" height="33.55" fill="#e3e3e8"/>
<rect x="896.35" y="347.35" width="1" height="35.00" fill="#e3e3e8"/>
<rect x="907.70" y="244.4" width="1" height="33.55" fill="#e3e3e8"/>
<rect x="907.70" y="347.35" width="1" height="35.00" fill="#e3e3e8"/>
<rect x="919.05" y="244.4" width="1" height="33.55" fill="#e3e3e8"/>
<rect x="919.05" y="347.35" width="1" height="35.00" fill="#e3e3e8"/>
<rect x="930.40" y="244.4" width="1" height="33.55" fill="#e3e3e8"/>
<rect x="930.40" y="347.35" width="1" height="35.00" fill="#e3e3e8"/>
<rect x="941.75" y="244.4" width="1" height="45.35" fill="#e3e3e8"/>
<rect x="941.75" y="336.65" width="1" height="45.70" fill="#e3e3e8"/>
<rect x="953.10" y="244.4" width="1" height="33.55" fill="#e3e3e8"/>
<rect x="953.10" y="347.35" width="1" height="35.00" fill="#e3e3e8"/>
<rect x="964.45" y="244.4" width="1" height="33.55" fill="#e3e3e8"/>
<rect x="964.45" y="347.35" width="1" height="35.00" fill="#e3e3e8"/>
<rect x="975.80" y="244.4" width="1" height="33.55" fill="#e3e3e8"/>
<rect x="975.80" y="347.35" width="1" height="35.00" fill="#e3e3e8"/>
<rect x="987.15" y="244.4" width="1" height="33.55" fill="#e3e3e8"/>
<rect x="987.15" y="347.35" width="1" height="35.00" fill="#e3e3e8"/>
<rect x="998.50" y="244.4" width="1" height="137.95" fill="#d9d9df"/>
<rect x="89.4" y="244.4" width="1.6" height="138.25" fill="#8c8a80"/>
<text x="76.50" y="256.45" font-size="9.8" font-weight="normal" font-style="normal" fill="#303030" >15</text>
<text x="76.50" y="299.95" font-size="9.8" font-weight="normal" font-style="normal" fill="#303030" >10</text>
<text x="81.94" y="343.45" font-size="9.8" font-weight="normal" font-style="normal" fill="#303030" >5</text>
<text x="81.94" y="379.65" font-size="9.8" font-weight="normal" font-style="normal" fill="#303030" >0</text>
<text x="92.92" y="255.55" font-size="10.2" font-weight="normal" font-style="normal" fill="#5c8090" stroke="#5c8090" stroke-width="0.2">0</text>
<text transform="translate(206.39 255.55) scale(0.9490 1)" font-size="10.2" font-weight="normal" font-style="normal" fill="#5c8090" stroke="#5c8090" stroke-width="0.2">100 мс</text>
<text transform="translate(320.13 255.55) scale(0.9414 1)" font-size="10.2" font-weight="normal" font-style="normal" fill="#5c8090" stroke="#5c8090" stroke-width="0.2">200 мс</text>
<text transform="translate(433.75 255.55) scale(0.9376 1)" font-size="10.2" font-weight="normal" font-style="normal" fill="#5c8090" stroke="#5c8090" stroke-width="0.2">300 мс</text>
<text transform="translate(547.37 255.55) scale(0.9339 1)" font-size="10.2" font-weight="normal" font-style="normal" fill="#5c8090" stroke="#5c8090" stroke-width="0.2">400 мс</text>
<text transform="translate(660.69 255.55) scale(0.9395 1)" font-size="10.2" font-weight="normal" font-style="normal" fill="#5c8090" stroke="#5c8090" stroke-width="0.2">500 мс</text>
<text transform="translate(774.13 255.55) scale(0.9414 1)" font-size="10.2" font-weight="normal" font-style="normal" fill="#5c8090" stroke="#5c8090" stroke-width="0.2">600 мс</text>
<text transform="translate(887.63 255.55) scale(0.9414 1)" font-size="10.2" font-weight="normal" font-style="normal" fill="#5c8090" stroke="#5c8090" stroke-width="0.2">700 мс</text>
<g transform="translate(3.44 274.15) scale(0.9068 1)"><text font-size="29.5" font-weight="bold" fill="#1a5c6c" stroke="#1a5c6c" stroke-width="0.5">In 2</text></g>
<g transform="translate(1.24 271.85) scale(0.9068 1)"><text font-size="29.5" font-weight="bold" fill="#000" stroke="#000" stroke-width="0.5">In 2</text></g>
<rect x="91" y="385.0" width="909" height="138.0999999999999" fill="#ffffff"/>
<rect x="0" y="385.0" width="89.4" height="1" fill="#f6f5ee"/>
<rect x="0" y="385.0" width="2.5" height="138.0999999999999" fill="#f3f2ea"/>
<rect x="0" y="523.0999999999999" width="91" height="1.5" fill="#a4a294"/>
<rect x="91" y="523.0999999999999" width="909" height="1.5" fill="#e4e2e8"/>
<rect x="91" y="393.40" width="909" height="1" fill="#dcdce2"/>
<rect x="91" y="436.90" width="909" height="1" fill="#dcdce2"/>
<rect x="91" y="480.40" width="909" height="1" fill="#dcdce2"/>
<rect x="101.85" y="385.0" width="1" height="33.70" fill="#e3e3e8"/>
<rect x="101.85" y="488.10" width="1" height="35.00" fill="#e3e3e8"/>
<rect x="113.20" y="385.0" width="1" height="33.70" fill="#e3e3e8"/>
<rect x="113.20" y="488.10" width="1" height="35.00" fill="#e3e3e8"/>
<rect x="124.55" y="385.0" width="1" height="33.70" fill="#e3e3e8"/>
<rect x="124.55" y="488.10" width="1" height="35.00" fill="#e3e3e8"/>
<rect x="135.90" y="385.0" width="1" height="33.70" fill="#e3e3e8"/>
<rect x="135.90" y="488.10" width="1" height="35.00" fill="#e3e3e8"/>
<rect x="147.25" y="385.0" width="1" height="45.50" fill="#e3e3e8"/>
<rect x="147.25" y="477.40" width="1" height="45.70" fill="#e3e3e8"/>
<rect x="158.60" y="385.0" width="1" height="33.70" fill="#e3e3e8"/>
<rect x="158.60" y="488.10" width="1" height="35.00" fill="#e3e3e8"/>
<rect x="169.95" y="385.0" width="1" height="33.70" fill="#e3e3e8"/>
<rect x="169.95" y="488.10" width="1" height="35.00" fill="#e3e3e8"/>
<rect x="181.30" y="385.0" width="1" height="33.70" fill="#e3e3e8"/>
<rect x="181.30" y="488.10" width="1" height="35.00" fill="#e3e3e8"/>
<rect x="192.65" y="385.0" width="1" height="33.70" fill="#e3e3e8"/>
<rect x="192.65" y="488.10" width="1" height="35.00" fill="#e3e3e8"/>
<rect x="204.00" y="385.0" width="1" height="138.10" fill="#d9d9df"/>
<rect x="215.35" y="385.0" width="1" height="33.70" fill="#e3e3e8"/>
<rect x="215.35" y="488.10" width="1" height="35.00" fill="#e3e3e8"/>
<rect x="226.70" y="385.0" width="1" height="33.70" fill="#e3e3e8"/>
<rect x="226.70" y="488.10" width="1" height="35.00" fill="#e3e3e8"/>
<rect x="238.05" y="385.0" width="1" height="33.70" fill="#e3e3e8"/>
<rect x="238.05" y="488.10" width="1" height="35.00" fill="#e3e3e8"/>
<rect x="249.40" y="385.0" width="1" height="33.70" fill="#e3e3e8"/>
<rect x="249.40" y="488.10" width="1" height="35.00" fill="#e3e3e8"/>
<rect x="260.75" y="385.0" width="1" height="45.50" fill="#e3e3e8"/>
<rect x="260.75" y="477.40" width="1" height="45.70" fill="#e3e3e8"/>
<rect x="272.10" y="385.0" width="1" height="33.70" fill="#e3e3e8"/>
<rect x="272.10" y="488.10" width="1" height="35.00" fill="#e3e3e8"/>
<rect x="283.45" y="385.0" width="1" height="33.70" fill="#e3e3e8"/>
<rect x="283.45" y="488.10" width="1" height="35.00" fill="#e3e3e8"/>
<rect x="294.80" y="385.0" width="1" height="33.70" fill="#e3e3e8"/>
<rect x="294.80" y="488.10" width="1" height="35.00" fill="#e3e3e8"/>
<rect x="306.15" y="385.0" width="1" height="33.70" fill="#e3e3e8"/>
<rect x="306.15" y="488.10" width="1" height="35.00" fill="#e3e3e8"/>
<rect x="317.50" y="385.0" width="1" height="138.10" fill="#d9d9df"/>
<rect x="328.85" y="385.0" width="1" height="33.70" fill="#e3e3e8"/>
<rect x="328.85" y="488.10" width="1" height="35.00" fill="#e3e3e8"/>
<rect x="340.20" y="385.0" width="1" height="33.70" fill="#e3e3e8"/>
<rect x="340.20" y="488.10" width="1" height="35.00" fill="#e3e3e8"/>
<rect x="351.55" y="385.0" width="1" height="33.70" fill="#e3e3e8"/>
<rect x="351.55" y="488.10" width="1" height="35.00" fill="#e3e3e8"/>
<rect x="362.90" y="385.0" width="1" height="33.70" fill="#e3e3e8"/>
<rect x="362.90" y="488.10" width="1" height="35.00" fill="#e3e3e8"/>
<rect x="374.25" y="385.0" width="1" height="45.50" fill="#e3e3e8"/>
<rect x="374.25" y="477.40" width="1" height="45.70" fill="#e3e3e8"/>
<rect x="385.60" y="385.0" width="1" height="33.70" fill="#e3e3e8"/>
<rect x="385.60" y="488.10" width="1" height="35.00" fill="#e3e3e8"/>
<rect x="396.95" y="385.0" width="1" height="33.70" fill="#e3e3e8"/>
<rect x="396.95" y="488.10" width="1" height="35.00" fill="#e3e3e8"/>
<rect x="408.30" y="385.0" width="1" height="33.70" fill="#e3e3e8"/>
<rect x="408.30" y="488.10" width="1" height="35.00" fill="#e3e3e8"/>
<rect x="419.65" y="385.0" width="1" height="33.70" fill="#e3e3e8"/>
<rect x="419.65" y="488.10" width="1" height="35.00" fill="#e3e3e8"/>
<rect x="431.00" y="385.0" width="1" height="138.10" fill="#d9d9df"/>
<rect x="442.35" y="385.0" width="1" height="33.70" fill="#e3e3e8"/>
<rect x="442.35" y="488.10" width="1" height="35.00" fill="#e3e3e8"/>
<rect x="453.70" y="385.0" width="1" height="33.70" fill="#e3e3e8"/>
<rect x="453.70" y="488.10" width="1" height="35.00" fill="#e3e3e8"/>
<rect x="465.05" y="385.0" width="1" height="33.70" fill="#e3e3e8"/>
<rect x="465.05" y="488.10" width="1" height="35.00" fill="#e3e3e8"/>
<rect x="476.40" y="385.0" width="1" height="33.70" fill="#e3e3e8"/>
<rect x="476.40" y="488.10" width="1" height="35.00" fill="#e3e3e8"/>
<rect x="487.75" y="385.0" width="1" height="45.50" fill="#e3e3e8"/>
<rect x="487.75" y="477.40" width="1" height="45.70" fill="#e3e3e8"/>
<rect x="499.10" y="385.0" width="1" height="33.70" fill="#e3e3e8"/>
<rect x="499.10" y="488.10" width="1" height="35.00" fill="#e3e3e8"/>
<rect x="510.45" y="385.0" width="1" height="33.70" fill="#e3e3e8"/>
<rect x="510.45" y="488.10" width="1" height="35.00" fill="#e3e3e8"/>
<rect x="521.80" y="385.0" width="1" height="33.70" fill="#e3e3e8"/>
<rect x="521.80" y="488.10" width="1" height="35.00" fill="#e3e3e8"/>
<rect x="533.15" y="385.0" width="1" height="33.70" fill="#e3e3e8"/>
<rect x="533.15" y="488.10" width="1" height="35.00" fill="#e3e3e8"/>
<rect x="544.50" y="385.0" width="1" height="138.10" fill="#d9d9df"/>
<rect x="555.85" y="385.0" width="1" height="33.70" fill="#e3e3e8"/>
<rect x="555.85" y="488.10" width="1" height="35.00" fill="#e3e3e8"/>
<rect x="567.20" y="385.0" width="1" height="33.70" fill="#e3e3e8"/>
<rect x="567.20" y="488.10" width="1" height="35.00" fill="#e3e3e8"/>
<rect x="578.55" y="385.0" width="1" height="33.70" fill="#e3e3e8"/>
<rect x="578.55" y="488.10" width="1" height="35.00" fill="#e3e3e8"/>
<rect x="589.90" y="385.0" width="1" height="33.70" fill="#e3e3e8"/>
<rect x="589.90" y="488.10" width="1" height="35.00" fill="#e3e3e8"/>
<rect x="601.25" y="385.0" width="1" height="45.50" fill="#e3e3e8"/>
<rect x="601.25" y="477.40" width="1" height="45.70" fill="#e3e3e8"/>
<rect x="612.60" y="385.0" width="1" height="33.70" fill="#e3e3e8"/>
<rect x="612.60" y="488.10" width="1" height="35.00" fill="#e3e3e8"/>
<rect x="623.95" y="385.0" width="1" height="33.70" fill="#e3e3e8"/>
<rect x="623.95" y="488.10" width="1" height="35.00" fill="#e3e3e8"/>
<rect x="635.30" y="385.0" width="1" height="33.70" fill="#e3e3e8"/>
<rect x="635.30" y="488.10" width="1" height="35.00" fill="#e3e3e8"/>
<rect x="646.65" y="385.0" width="1" height="33.70" fill="#e3e3e8"/>
<rect x="646.65" y="488.10" width="1" height="35.00" fill="#e3e3e8"/>
<rect x="658.00" y="385.0" width="1" height="138.10" fill="#d9d9df"/>
<rect x="669.35" y="385.0" width="1" height="33.70" fill="#e3e3e8"/>
<rect x="669.35" y="488.10" width="1" height="35.00" fill="#e3e3e8"/>
<rect x="680.70" y="385.0" width="1" height="33.70" fill="#e3e3e8"/>
<rect x="680.70" y="488.10" width="1" height="35.00" fill="#e3e3e8"/>
<rect x="692.05" y="385.0" width="1" height="33.70" fill="#e3e3e8"/>
<rect x="692.05" y="488.10" width="1" height="35.00" fill="#e3e3e8"/>
<rect x="703.40" y="385.0" width="1" height="33.70" fill="#e3e3e8"/>
<rect x="703.40" y="488.10" width="1" height="35.00" fill="#e3e3e8"/>
<rect x="714.75" y="385.0" width="1" height="45.50" fill="#e3e3e8"/>
<rect x="714.75" y="477.40" width="1" height="45.70" fill="#e3e3e8"/>
<rect x="726.10" y="385.0" width="1" height="33.70" fill="#e3e3e8"/>
<rect x="726.10" y="488.10" width="1" height="35.00" fill="#e3e3e8"/>
<rect x="737.45" y="385.0" width="1" height="33.70" fill="#e3e3e8"/>
<rect x="737.45" y="488.10" width="1" height="35.00" fill="#e3e3e8"/>
<rect x="748.80" y="385.0" width="1" height="33.70" fill="#e3e3e8"/>
<rect x="748.80" y="488.10" width="1" height="35.00" fill="#e3e3e8"/>
<rect x="760.15" y="385.0" width="1" height="33.70" fill="#e3e3e8"/>
<rect x="760.15" y="488.10" width="1" height="35.00" fill="#e3e3e8"/>
<rect x="771.50" y="385.0" width="1" height="138.10" fill="#d9d9df"/>
<rect x="782.85" y="385.0" width="1" height="33.70" fill="#e3e3e8"/>
<rect x="782.85" y="488.10" width="1" height="35.00" fill="#e3e3e8"/>
<rect x="794.20" y="385.0" width="1" height="33.70" fill="#e3e3e8"/>
<rect x="794.20" y="488.10" width="1" height="35.00" fill="#e3e3e8"/>
<rect x="805.55" y="385.0" width="1" height="33.70" fill="#e3e3e8"/>
<rect x="805.55" y="488.10" width="1" height="35.00" fill="#e3e3e8"/>
<rect x="816.90" y="385.0" width="1" height="33.70" fill="#e3e3e8"/>
<rect x="816.90" y="488.10" width="1" height="35.00" fill="#e3e3e8"/>
<rect x="828.25" y="385.0" width="1" height="45.50" fill="#e3e3e8"/>
<rect x="828.25" y="477.40" width="1" height="45.70" fill="#e3e3e8"/>
<rect x="839.60" y="385.0" width="1" height="33.70" fill="#e3e3e8"/>
<rect x="839.60" y="488.10" width="1" height="35.00" fill="#e3e3e8"/>
<rect x="850.95" y="385.0" width="1" height="33.70" fill="#e3e3e8"/>
<rect x="850.95" y="488.10" width="1" height="35.00" fill="#e3e3e8"/>
<rect x="862.30" y="385.0" width="1" height="33.70" fill="#e3e3e8"/>
<rect x="862.30" y="488.10" width="1" height="35.00" fill="#e3e3e8"/>
<rect x="873.65" y="385.0" width="1" height="33.70" fill="#e3e3e8"/>
<rect x="873.65" y="488.10" width="1" height="35.00" fill="#e3e3e8"/>
<rect x="885.00" y="385.0" width="1" height="138.10" fill="#d9d9df"/>
<rect x="896.35" y="385.0" width="1" height="33.70" fill="#e3e3e8"/>
<rect x="896.35" y="488.10" width="1" height="35.00" fill="#e3e3e8"/>
<rect x="907.70" y="385.0" width="1" height="33.70" fill="#e3e3e8"/>
<rect x="907.70" y="488.10" width="1" height="35.00" fill="#e3e3e8"/>
<rect x="919.05" y="385.0" width="1" height="33.70" fill="#e3e3e8"/>
<rect x="919.05" y="488.10" width="1" height="35.00" fill="#e3e3e8"/>
<rect x="930.40" y="385.0" width="1" height="33.70" fill="#e3e3e8"/>
<rect x="930.40" y="488.10" width="1" height="35.00" fill="#e3e3e8"/>
<rect x="941.75" y="385.0" width="1" height="45.50" fill="#e3e3e8"/>
<rect x="941.75" y="477.40" width="1" height="45.70" fill="#e3e3e8"/>
<rect x="953.10" y="385.0" width="1" height="33.70" fill="#e3e3e8"/>
<rect x="953.10" y="488.10" width="1" height="35.00" fill="#e3e3e8"/>
<rect x="964.45" y="385.0" width="1" height="33.70" fill="#e3e3e8"/>
<rect x="964.45" y="488.10" width="1" height="35.00" fill="#e3e3e8"/>
<rect x="975.80" y="385.0" width="1" height="33.70" fill="#e3e3e8"/>
<rect x="975.80" y="488.10" width="1" height="35.00" fill="#e3e3e8"/>
<rect x="987.15" y="385.0" width="1" height="33.70" fill="#e3e3e8"/>
<rect x="987.15" y="488.10" width="1" height="35.00" fill="#e3e3e8"/>
<rect x="998.50" y="385.0" width="1" height="138.10" fill="#d9d9df"/>
<rect x="89.4" y="385.0" width="1.6" height="138.40" fill="#8c8a80"/>
<text x="76.50" y="397.20" font-size="9.8" font-weight="normal" font-style="normal" fill="#303030" >15</text>
<text x="76.50" y="440.70" font-size="9.8" font-weight="normal" font-style="normal" fill="#303030" >10</text>
<text x="81.94" y="484.20" font-size="9.8" font-weight="normal" font-style="normal" fill="#303030" >5</text>
<text x="81.94" y="520.40" font-size="9.8" font-weight="normal" font-style="normal" fill="#303030" >0</text>
<text x="92.92" y="396.30" font-size="10.2" font-weight="normal" font-style="normal" fill="#6a8c70" stroke="#6a8c70" stroke-width="0.2">0</text>
<text transform="translate(206.39 396.30) scale(0.9490 1)" font-size="10.2" font-weight="normal" font-style="normal" fill="#6a8c70" stroke="#6a8c70" stroke-width="0.2">100 мс</text>
<text transform="translate(320.13 396.30) scale(0.9414 1)" font-size="10.2" font-weight="normal" font-style="normal" fill="#6a8c70" stroke="#6a8c70" stroke-width="0.2">200 мс</text>
<text transform="translate(433.75 396.30) scale(0.9376 1)" font-size="10.2" font-weight="normal" font-style="normal" fill="#6a8c70" stroke="#6a8c70" stroke-width="0.2">300 мс</text>
<text transform="translate(547.37 396.30) scale(0.9339 1)" font-size="10.2" font-weight="normal" font-style="normal" fill="#6a8c70" stroke="#6a8c70" stroke-width="0.2">400 мс</text>
<text transform="translate(660.69 396.30) scale(0.9395 1)" font-size="10.2" font-weight="normal" font-style="normal" fill="#6a8c70" stroke="#6a8c70" stroke-width="0.2">500 мс</text>
<text transform="translate(774.13 396.30) scale(0.9414 1)" font-size="10.2" font-weight="normal" font-style="normal" fill="#6a8c70" stroke="#6a8c70" stroke-width="0.2">600 мс</text>
<text transform="translate(887.63 396.30) scale(0.9414 1)" font-size="10.2" font-weight="normal" font-style="normal" fill="#6a8c70" stroke="#6a8c70" stroke-width="0.2">700 мс</text>
<g transform="translate(3.42 414.90) scale(0.9191 1)"><text font-size="29.5" font-weight="bold" fill="#2c7430" stroke="#2c7430" stroke-width="0.5">In 3</text></g>
<g transform="translate(1.22 412.60) scale(0.9191 1)"><text font-size="29.5" font-weight="bold" fill="#000" stroke="#000" stroke-width="0.5">In 3</text></g>
<path d="M91 340.15 L102.6 340.15" stroke="#1c5a68" stroke-width="2.2"/>
<path d="M101.8 340.15 L103.39999999999999 381.35" stroke="#1c5a68" stroke-width="1.1" opacity="0.85"/>
<path d="M102.6 381.35 L314.2 381.35" stroke="#1c5a68" stroke-width="2.2"/>
<path d="M313.4 340.15 L315.0 381.35" stroke="#1c5a68" stroke-width="1.1" opacity="0.85"/>
<path d="M314.2 340.15 L530.0 340.15" stroke="#1c5a68" stroke-width="2.2"/>
<path d="M529.2 340.15 L530.8000000000001 381.35" stroke="#1c5a68" stroke-width="1.1" opacity="0.85"/>
<path d="M530.0 381.35 L740.1999999999999 381.35" stroke="#1c5a68" stroke-width="2.2"/>
<path d="M739.4 340.15 L741.0 381.35" stroke="#1c5a68" stroke-width="1.1" opacity="0.85"/>
<path d="M740.1999999999999 340.15 L953.5 340.15" stroke="#1c5a68" stroke-width="2.2"/>
<path d="M952.7 340.15 L954.3000000000001 381.35" stroke="#1c5a68" stroke-width="1.1" opacity="0.85"/>
<path d="M953.5 381.35 L995 381.35" stroke="#1c5a68" stroke-width="2.2"/>
<path d="M91 522.0999999999999 L133.20000000000002 522.0999999999999" stroke="#22602c" stroke-width="2.2"/>
<path d="M132.4 480.9 L134.0 522.0999999999999" stroke="#22602c" stroke-width="1.1" opacity="0.85"/>
<path d="M133.20000000000002 480.9 L350.3 480.9" stroke="#22602c" stroke-width="2.2"/>
<path d="M349.5 480.9 L351.1 522.0999999999999" stroke="#22602c" stroke-width="1.1" opacity="0.85"/>
<path d="M350.3 522.0999999999999 L561.1999999999999 522.0999999999999" stroke="#22602c" stroke-width="2.2"/>
<path d="M560.4 480.9 L562.0 522.0999999999999" stroke="#22602c" stroke-width="1.1" opacity="0.85"/>
<path d="M561.1999999999999 480.9 L775.0999999999999 480.9" stroke="#22602c" stroke-width="2.2"/>
<path d="M774.3 480.9 L775.9 522.0999999999999" stroke="#22602c" stroke-width="1.1" opacity="0.85"/>
<path d="M775.0999999999999 522.0999999999999 L985.0 522.0999999999999" stroke="#22602c" stroke-width="2.2"/>
<path d="M984.2 480.9 L985.8000000000001 522.0999999999999" stroke="#22602c" stroke-width="1.1" opacity="0.85"/>
<path d="M985.0 480.9 L995 480.9" stroke="#22602c" stroke-width="2.2"/>
<rect x="152.8" y="199.8" width="1.4" height="40.79999999999998" fill="#fff" opacity="0.5"/>
<rect x="238.10000000000002" y="199.8" width="1.4" height="40.79999999999998" fill="#fff" opacity="0.5"/>
<rect x="425.90000000000003" y="199.8" width="1.4" height="40.79999999999998" fill="#fff" opacity="0.5"/>
<rect x="508.0" y="199.8" width="1.4" height="40.79999999999998" fill="#fff" opacity="0.5"/>
<rect x="587.6999999999999" y="199.8" width="1.4" height="40.79999999999998" fill="#fff" opacity="0.5"/>
<rect x="663.5999999999999" y="199.8" width="1.4" height="40.79999999999998" fill="#fff" opacity="0.5"/>
<rect x="830.3" y="199.8" width="1.4" height="40.79999999999998" fill="#fff" opacity="0.5"/>
<rect x="906.3" y="199.8" width="1.4" height="40.79999999999998" fill="#fff" opacity="0.5"/>
<path d="M91.00 206.3 L92.78 206.3 L92.78 234.1 L91.00 234.1Z M94.55 206.3 L96.33 206.3 L96.33 234.1 L94.55 234.1Z M98.10 206.3 L99.88 206.3 L99.88 234.1 L98.10 234.1Z M101.65 206.3 L103.43 206.3 L103.43 234.1 L101.65 234.1Z M105.20 206.3 L106.98 206.3 L106.98 234.1 L105.20 234.1Z M108.75 206.3 L110.53 206.3 L110.53 234.1 L108.75 234.1Z M121.70 206.3 L123.48 206.3 L123.48 234.1 L121.70 234.1Z M125.25 206.3 L127.03 206.3 L127.03 234.1 L125.25 234.1Z M128.80 206.3 L130.58 206.3 L130.58 234.1 L128.80 234.1Z M132.35 206.3 L134.13 206.3 L134.13 234.1 L132.35 234.1Z M135.90 206.3 L137.68 206.3 L137.68 234.1 L135.90 234.1Z M139.45 206.3 L141.23 206.3 L141.23 234.1 L139.45 234.1Z M143.00 206.3 L144.78 206.3 L144.78 234.1 L143.00 234.1Z M146.55 206.3 L148.33 206.3 L148.33 234.1 L146.55 234.1Z M150.10 206.3 L151.88 206.3 L151.88 234.1 L150.10 234.1Z M154.95 206.3 L156.73 206.3 L156.73 234.1 L154.95 234.1Z M158.50 206.3 L160.28 206.3 L160.28 234.1 L158.50 234.1Z M162.05 206.3 L163.83 206.3 L163.83 234.1 L162.05 234.1Z M165.60 206.3 L167.38 206.3 L167.38 234.1 L165.60 234.1Z M169.15 206.3 L170.93 206.3 L170.93 234.1 L169.15 234.1Z M172.70 206.3 L174.48 206.3 L174.48 234.1 L172.70 234.1Z M176.25 206.3 L178.03 206.3 L178.03 234.1 L176.25 234.1Z M179.80 206.3 L181.58 206.3 L181.58 234.1 L179.80 234.1Z M183.35 206.3 L185.13 206.3 L185.13 234.1 L183.35 234.1Z M186.90 206.3 L188.68 206.3 L188.68 234.1 L186.90 234.1Z M190.45 206.3 L192.23 206.3 L192.23 234.1 L190.45 234.1Z M194.00 206.3 L195.78 206.3 L195.78 234.1 L194.00 234.1Z M197.55 206.3 L199.33 206.3 L199.33 234.1 L197.55 234.1Z M201.10 206.3 L202.88 206.3 L202.88 234.1 L201.10 234.1Z M204.65 206.3 L206.43 206.3 L206.43 234.1 L204.65 234.1Z M208.20 206.3 L209.98 206.3 L209.98 234.1 L208.20 234.1Z M211.75 206.3 L213.53 206.3 L213.53 234.1 L211.75 234.1Z M215.30 206.3 L217.08 206.3 L217.08 234.1 L215.30 234.1Z M218.85 206.3 L220.63 206.3 L220.63 234.1 L218.85 234.1Z M222.40 206.3 L224.18 206.3 L224.18 234.1 L222.40 234.1Z M225.95 206.3 L227.73 206.3 L227.73 234.1 L225.95 234.1Z M229.50 206.3 L231.28 206.3 L231.28 234.1 L229.50 234.1Z M233.05 206.3 L234.83 206.3 L234.83 234.1 L233.05 234.1Z M236.60 206.3 L238.38 206.3 L238.38 234.1 L236.60 234.1Z M241.45 206.3 L243.23 206.3 L243.23 234.1 L241.45 234.1Z M245.00 206.3 L246.78 206.3 L246.78 234.1 L245.00 234.1Z M248.55 206.3 L250.33 206.3 L250.33 234.1 L248.55 234.1Z M252.10 206.3 L253.88 206.3 L253.88 234.1 L252.10 234.1Z M255.65 206.3 L257.43 206.3 L257.43 234.1 L255.65 234.1Z M259.20 206.3 L260.98 206.3 L260.98 234.1 L259.20 234.1Z M262.75 206.3 L264.53 206.3 L264.53 234.1 L262.75 234.1Z M266.30 206.3 L268.08 206.3 L268.08 234.1 L266.30 234.1Z M269.85 206.3 L271.63 206.3 L271.63 234.1 L269.85 234.1Z M273.40 206.3 L275.18 206.3 L275.18 234.1 L273.40 234.1Z M276.95 206.3 L278.73 206.3 L278.73 234.1 L276.95 234.1Z M280.50 206.3 L282.28 206.3 L282.28 234.1 L280.50 234.1Z M284.05 206.3 L285.83 206.3 L285.83 234.1 L284.05 234.1Z M287.60 206.3 L289.38 206.3 L289.38 234.1 L287.60 234.1Z M291.15 206.3 L292.92 206.3 L292.92 234.1 L291.15 234.1Z M294.70 206.3 L296.47 206.3 L296.47 234.1 L294.70 234.1Z M298.25 206.3 L300.02 206.3 L300.02 234.1 L298.25 234.1Z M301.80 206.3 L303.57 206.3 L303.57 234.1 L301.80 234.1Z M305.35 206.3 L307.12 206.3 L307.12 234.1 L305.35 234.1Z M308.90 206.3 L310.67 206.3 L310.67 234.1 L308.90 234.1Z M312.45 206.3 L314.22 206.3 L314.22 234.1 L312.45 234.1Z M316.00 206.3 L317.77 206.3 L317.77 234.1 L316.00 234.1Z M319.55 206.3 L321.32 206.3 L321.32 234.1 L319.55 234.1Z M323.10 206.3 L324.87 206.3 L324.87 234.1 L323.10 234.1Z M333.60 206.3 L335.38 206.3 L335.38 234.1 L333.60 234.1Z M337.15 206.3 L338.92 206.3 L338.92 234.1 L337.15 234.1Z M340.70 206.3 L342.47 206.3 L342.47 234.1 L340.70 234.1Z M344.25 206.3 L346.02 206.3 L346.02 234.1 L344.25 234.1Z M347.80 206.3 L349.57 206.3 L349.57 234.1 L347.80 234.1Z M351.35 206.3 L353.12 206.3 L353.12 234.1 L351.35 234.1Z M354.90 206.3 L356.67 206.3 L356.67 234.1 L354.90 234.1Z M358.45 206.3 L360.22 206.3 L360.22 234.1 L358.45 234.1Z M362.00 206.3 L363.77 206.3 L363.77 234.1 L362.00 234.1Z M365.55 206.3 L367.32 206.3 L367.32 234.1 L365.55 234.1Z M369.10 206.3 L370.87 206.3 L370.87 234.1 L369.10 234.1Z M372.65 206.3 L374.42 206.3 L374.42 234.1 L372.65 234.1Z M376.20 206.3 L377.97 206.3 L377.97 234.1 L376.20 234.1Z M379.75 206.3 L381.52 206.3 L381.52 234.1 L379.75 234.1Z M383.30 206.3 L385.07 206.3 L385.07 234.1 L383.30 234.1Z M386.85 206.3 L388.62 206.3 L388.62 234.1 L386.85 234.1Z M390.40 206.3 L392.17 206.3 L392.17 234.1 L390.40 234.1Z M393.95 206.3 L395.72 206.3 L395.72 234.1 L393.95 234.1Z M397.50 206.3 L399.27 206.3 L399.27 234.1 L397.50 234.1Z M401.05 206.3 L402.82 206.3 L402.82 234.1 L401.05 234.1Z M404.60 206.3 L406.37 206.3 L406.37 234.1 L404.60 234.1Z M408.15 206.3 L409.92 206.3 L409.92 234.1 L408.15 234.1Z M411.70 206.3 L413.47 206.3 L413.47 234.1 L411.70 234.1Z M415.25 206.3 L417.02 206.3 L417.02 234.1 L415.25 234.1Z M418.80 206.3 L420.57 206.3 L420.57 234.1 L418.80 234.1Z M422.35 206.3 L424.12 206.3 L424.12 234.1 L422.35 234.1Z M425.90 206.3 L427.67 206.3 L427.67 234.1 L425.90 234.1Z M430.75 206.3 L432.52 206.3 L432.52 234.1 L430.75 234.1Z M434.30 206.3 L436.07 206.3 L436.07 234.1 L434.30 234.1Z M437.85 206.3 L439.62 206.3 L439.62 234.1 L437.85 234.1Z M441.40 206.3 L443.17 206.3 L443.17 234.1 L441.40 234.1Z M444.95 206.3 L446.72 206.3 L446.72 234.1 L444.95 234.1Z M448.50 206.3 L450.27 206.3 L450.27 234.1 L448.50 234.1Z M452.05 206.3 L453.82 206.3 L453.82 234.1 L452.05 234.1Z M455.60 206.3 L457.37 206.3 L457.37 234.1 L455.60 234.1Z M459.15 206.3 L460.92 206.3 L460.92 234.1 L459.15 234.1Z M462.70 206.3 L464.47 206.3 L464.47 234.1 L462.70 234.1Z M466.25 206.3 L468.02 206.3 L468.02 234.1 L466.25 234.1Z M469.80 206.3 L471.57 206.3 L471.57 234.1 L469.80 234.1Z M473.35 206.3 L475.12 206.3 L475.12 234.1 L473.35 234.1Z M476.90 206.3 L478.67 206.3 L478.67 234.1 L476.90 234.1Z M480.45 206.3 L482.22 206.3 L482.22 234.1 L480.45 234.1Z M484.00 206.3 L485.77 206.3 L485.77 234.1 L484.00 234.1Z M487.55 206.3 L489.32 206.3 L489.32 234.1 L487.55 234.1Z M491.10 206.3 L492.87 206.3 L492.87 234.1 L491.10 234.1Z M494.65 206.3 L496.42 206.3 L496.42 234.1 L494.65 234.1Z M498.20 206.3 L499.97 206.3 L499.97 234.1 L498.20 234.1Z M501.75 206.3 L503.52 206.3 L503.52 234.1 L501.75 234.1Z M505.30 206.3 L507.07 206.3 L507.07 234.1 L505.30 234.1Z M510.15 206.3 L511.92 206.3 L511.92 234.1 L510.15 234.1Z M513.70 206.3 L515.47 206.3 L515.47 234.1 L513.70 234.1Z M517.25 206.3 L519.02 206.3 L519.02 234.1 L517.25 234.1Z M520.80 206.3 L522.57 206.3 L522.57 234.1 L520.80 234.1Z M524.35 206.3 L526.12 206.3 L526.12 234.1 L524.35 234.1Z M527.90 206.3 L529.67 206.3 L529.67 234.1 L527.90 234.1Z M531.45 206.3 L533.22 206.3 L533.22 234.1 L531.45 234.1Z M535.00 206.3 L536.77 206.3 L536.77 234.1 L535.00 234.1Z M546.50 206.3 L548.27 206.3 L548.27 234.1 L546.50 234.1Z M550.05 206.3 L551.82 206.3 L551.82 234.1 L550.05 234.1Z M553.60 206.3 L555.37 206.3 L555.37 234.1 L553.60 234.1Z M557.15 206.3 L558.92 206.3 L558.92 234.1 L557.15 234.1Z M560.70 206.3 L562.47 206.3 L562.47 234.1 L560.70 234.1Z M564.25 206.3 L566.02 206.3 L566.02 234.1 L564.25 234.1Z M567.80 206.3 L569.57 206.3 L569.57 234.1 L567.80 234.1Z M571.35 206.3 L573.12 206.3 L573.12 234.1 L571.35 234.1Z M574.90 206.3 L576.67 206.3 L576.67 234.1 L574.90 234.1Z M578.45 206.3 L580.22 206.3 L580.22 234.1 L578.45 234.1Z M582.00 206.3 L583.77 206.3 L583.77 234.1 L582.00 234.1Z M585.55 206.3 L587.32 206.3 L587.32 234.1 L585.55 234.1Z M590.40 206.3 L592.17 206.3 L592.17 234.1 L590.40 234.1Z M593.95 206.3 L595.72 206.3 L595.72 234.1 L593.95 234.1Z M597.50 206.3 L599.27 206.3 L599.27 234.1 L597.50 234.1Z M601.05 206.3 L602.82 206.3 L602.82 234.1 L601.05 234.1Z M604.60 206.3 L606.37 206.3 L606.37 234.1 L604.60 234.1Z M608.15 206.3 L609.92 206.3 L609.92 234.1 L608.15 234.1Z M611.70 206.3 L613.47 206.3 L613.47 234.1 L611.70 234.1Z M615.25 206.3 L617.02 206.3 L617.02 234.1 L615.25 234.1Z M618.80 206.3 L620.57 206.3 L620.57 234.1 L618.80 234.1Z M622.35 206.3 L624.12 206.3 L624.12 234.1 L622.35 234.1Z M625.90 206.3 L627.67 206.3 L627.67 234.1 L625.90 234.1Z M629.45 206.3 L631.22 206.3 L631.22 234.1 L629.45 234.1Z M633.00 206.3 L634.77 206.3 L634.77 234.1 L633.00 234.1Z M636.55 206.3 L638.32 206.3 L638.32 234.1 L636.55 234.1Z M640.10 206.3 L641.87 206.3 L641.87 234.1 L640.10 234.1Z M643.65 206.3 L645.42 206.3 L645.42 234.1 L643.65 234.1Z M647.20 206.3 L648.97 206.3 L648.97 234.1 L647.20 234.1Z M650.75 206.3 L652.52 206.3 L652.52 234.1 L650.75 234.1Z M654.30 206.3 L656.07 206.3 L656.07 234.1 L654.30 234.1Z M657.85 206.3 L659.62 206.3 L659.62 234.1 L657.85 234.1Z M661.40 206.3 L663.17 206.3 L663.17 234.1 L661.40 234.1Z M666.25 206.3 L668.02 206.3 L668.02 234.1 L666.25 234.1Z M669.80 206.3 L671.57 206.3 L671.57 234.1 L669.80 234.1Z M673.35 206.3 L675.12 206.3 L675.12 234.1 L673.35 234.1Z M676.90 206.3 L678.67 206.3 L678.67 234.1 L676.90 234.1Z M680.45 206.3 L682.22 206.3 L682.22 234.1 L680.45 234.1Z M684.00 206.3 L685.77 206.3 L685.77 234.1 L684.00 234.1Z M687.55 206.3 L689.32 206.3 L689.32 234.1 L687.55 234.1Z M691.10 206.3 L692.87 206.3 L692.87 234.1 L691.10 234.1Z M694.65 206.3 L696.42 206.3 L696.42 234.1 L694.65 234.1Z M698.20 206.3 L699.97 206.3 L699.97 234.1 L698.20 234.1Z M701.75 206.3 L703.52 206.3 L703.52 234.1 L701.75 234.1Z M705.30 206.3 L707.07 206.3 L707.07 234.1 L705.30 234.1Z M708.85 206.3 L710.62 206.3 L710.62 234.1 L708.85 234.1Z M712.40 206.3 L714.17 206.3 L714.17 234.1 L712.40 234.1Z M715.95 206.3 L717.72 206.3 L717.72 234.1 L715.95 234.1Z M719.50 206.3 L721.27 206.3 L721.27 234.1 L719.50 234.1Z M723.05 206.3 L724.82 206.3 L724.82 234.1 L723.05 234.1Z M726.60 206.3 L728.37 206.3 L728.37 234.1 L726.60 234.1Z M730.15 206.3 L731.92 206.3 L731.92 234.1 L730.15 234.1Z M733.70 206.3 L735.47 206.3 L735.47 234.1 L733.70 234.1Z M737.25 206.3 L739.02 206.3 L739.02 234.1 L737.25 234.1Z M740.80 206.3 L742.57 206.3 L742.57 234.1 L740.80 234.1Z M744.35 206.3 L746.12 206.3 L746.12 234.1 L744.35 234.1Z M747.90 206.3 L749.67 206.3 L749.67 234.1 L747.90 234.1Z M760.60 206.3 L762.38 206.3 L762.38 234.1 L760.60 234.1Z M764.15 206.3 L765.92 206.3 L765.92 234.1 L764.15 234.1Z M767.70 206.3 L769.47 206.3 L769.47 234.1 L767.70 234.1Z M771.25 206.3 L773.02 206.3 L773.02 234.1 L771.25 234.1Z M774.80 206.3 L776.57 206.3 L776.57 234.1 L774.80 234.1Z M778.35 206.3 L780.12 206.3 L780.12 234.1 L778.35 234.1Z M781.90 206.3 L783.67 206.3 L783.67 234.1 L781.90 234.1Z M785.45 206.3 L787.22 206.3 L787.22 234.1 L785.45 234.1Z M789.00 206.3 L790.77 206.3 L790.77 234.1 L789.00 234.1Z M792.55 206.3 L794.32 206.3 L794.32 234.1 L792.55 234.1Z M796.10 206.3 L797.87 206.3 L797.87 234.1 L796.10 234.1Z M799.65 206.3 L801.42 206.3 L801.42 234.1 L799.65 234.1Z M803.20 206.3 L804.97 206.3 L804.97 234.1 L803.20 234.1Z M806.75 206.3 L808.52 206.3 L808.52 234.1 L806.75 234.1Z M810.30 206.3 L812.07 206.3 L812.07 234.1 L810.30 234.1Z M813.85 206.3 L815.62 206.3 L815.62 234.1 L813.85 234.1Z M817.40 206.3 L819.17 206.3 L819.17 234.1 L817.40 234.1Z M820.95 206.3 L822.72 206.3 L822.72 234.1 L820.95 234.1Z M824.50 206.3 L826.27 206.3 L826.27 234.1 L824.50 234.1Z M828.05 206.3 L829.82 206.3 L829.82 234.1 L828.05 234.1Z M832.90 206.3 L834.67 206.3 L834.67 234.1 L832.90 234.1Z M836.45 206.3 L838.22 206.3 L838.22 234.1 L836.45 234.1Z M840.00 206.3 L841.77 206.3 L841.77 234.1 L840.00 234.1Z M843.55 206.3 L845.32 206.3 L845.32 234.1 L843.55 234.1Z M847.10 206.3 L848.87 206.3 L848.87 234.1 L847.10 234.1Z M850.65 206.3 L852.42 206.3 L852.42 234.1 L850.65 234.1Z M854.20 206.3 L855.97 206.3 L855.97 234.1 L854.20 234.1Z M857.75 206.3 L859.52 206.3 L859.52 234.1 L857.75 234.1Z M861.30 206.3 L863.07 206.3 L863.07 234.1 L861.30 234.1Z M864.85 206.3 L866.62 206.3 L866.62 234.1 L864.85 234.1Z M868.40 206.3 L870.17 206.3 L870.17 234.1 L868.40 234.1Z M871.95 206.3 L873.72 206.3 L873.72 234.1 L871.95 234.1Z M875.50 206.3 L877.27 206.3 L877.27 234.1 L875.50 234.1Z M879.05 206.3 L880.82 206.3 L880.82 234.1 L879.05 234.1Z M882.60 206.3 L884.37 206.3 L884.37 234.1 L882.60 234.1Z M886.15 206.3 L887.92 206.3 L887.92 234.1 L886.15 234.1Z M889.70 206.3 L891.47 206.3 L891.47 234.1 L889.70 234.1Z M893.25 206.3 L895.02 206.3 L895.02 234.1 L893.25 234.1Z M896.80 206.3 L898.57 206.3 L898.57 234.1 L896.80 234.1Z M900.35 206.3 L902.12 206.3 L902.12 234.1 L900.35 234.1Z M903.90 206.3 L905.67 206.3 L905.67 234.1 L903.90 234.1Z M908.75 206.3 L910.52 206.3 L910.52 234.1 L908.75 234.1Z M912.30 206.3 L914.07 206.3 L914.07 234.1 L912.30 234.1Z M915.85 206.3 L917.62 206.3 L917.62 234.1 L915.85 234.1Z M919.40 206.3 L921.17 206.3 L921.17 234.1 L919.40 234.1Z M922.95 206.3 L924.72 206.3 L924.72 234.1 L922.95 234.1Z M926.50 206.3 L928.27 206.3 L928.27 234.1 L926.50 234.1Z M930.05 206.3 L931.82 206.3 L931.82 234.1 L930.05 234.1Z M933.60 206.3 L935.37 206.3 L935.37 234.1 L933.60 234.1Z M937.15 206.3 L938.92 206.3 L938.92 234.1 L937.15 234.1Z M940.70 206.3 L942.47 206.3 L942.47 234.1 L940.70 234.1Z M944.25 206.3 L946.02 206.3 L946.02 234.1 L944.25 234.1Z M947.80 206.3 L949.57 206.3 L949.57 234.1 L947.80 234.1Z M951.35 206.3 L953.12 206.3 L953.12 234.1 L951.35 234.1Z M954.90 206.3 L956.67 206.3 L956.67 234.1 L954.90 234.1Z M958.45 206.3 L960.22 206.3 L960.22 234.1 L958.45 234.1Z M962.00 206.3 L963.77 206.3 L963.77 234.1 L962.00 234.1Z M973.40 206.3 L975.17 206.3 L975.17 234.1 L973.40 234.1Z M976.95 206.3 L978.72 206.3 L978.72 234.1 L976.95 234.1Z M980.50 206.3 L982.27 206.3 L982.27 234.1 L980.50 234.1Z M984.05 206.3 L985.82 206.3 L985.82 234.1 L984.05 234.1Z M987.60 206.3 L989.37 206.3 L989.37 234.1 L987.60 234.1Z M991.15 206.3 L992.92 206.3 L992.92 234.1 L991.15 234.1Z " fill="#c4c47c" opacity="0.75"/>
<path d="M91.00 199.8 L92.78 199.8 L92.78 240.6 L94.55 240.6 L94.55 199.8 L96.33 199.8 L96.33 240.6 L98.10 240.6 L98.10 199.8 L99.88 199.8 L99.88 240.6 L101.65 240.6 L101.65 199.8 L103.43 199.8 L103.43 240.6 L105.20 240.6 L105.20 199.8 L106.98 199.8 L106.98 240.6 L108.75 240.6 L108.75 199.8 L110.53 199.8 L110.53 240.6 L112.30 240.6 L112.30 199.8 L113.50 199.8 M121.70 199.8 L123.48 199.8 L123.48 240.6 L125.25 240.6 L125.25 199.8 L127.03 199.8 L127.03 240.6 L128.80 240.6 L128.80 199.8 L130.58 199.8 L130.58 240.6 L132.35 240.6 L132.35 199.8 L134.13 199.8 L134.13 240.6 L135.90 240.6 L135.90 199.8 L137.68 199.8 L137.68 240.6 L139.45 240.6 L139.45 199.8 L141.23 199.8 L141.23 240.6 L143.00 240.6 L143.00 199.8 L144.78 199.8 L144.78 240.6 L146.55 240.6 L146.55 199.8 L148.33 199.8 L148.33 240.6 L150.10 240.6 L150.10 199.8 L151.88 199.8 L151.88 240.6 L154.95 240.6 L154.95 199.8 L156.73 199.8 L156.73 240.6 L158.50 240.6 L158.50 199.8 L160.28 199.8 L160.28 240.6 L162.05 240.6 L162.05 199.8 L163.83 199.8 L163.83 240.6 L165.60 240.6 L165.60 199.8 L167.38 199.8 L167.38 240.6 L169.15 240.6 L169.15 199.8 L170.93 199.8 L170.93 240.6 L172.70 240.6 L172.70 199.8 L174.48 199.8 L174.48 240.6 L176.25 240.6 L176.25 199.8 L178.03 199.8 L178.03 240.6 L179.80 240.6 L179.80 199.8 L181.58 199.8 L181.58 240.6 L183.35 240.6 L183.35 199.8 L185.13 199.8 L185.13 240.6 L186.90 240.6 L186.90 199.8 L188.68 199.8 L188.68 240.6 L190.45 240.6 L190.45 199.8 L192.23 199.8 L192.23 240.6 L194.00 240.6 L194.00 199.8 L195.78 199.8 L195.78 240.6 L197.55 240.6 L197.55 199.8 L199.33 199.8 L199.33 240.6 L201.10 240.6 L201.10 199.8 L202.88 199.8 L202.88 240.6 L204.65 240.6 L204.65 199.8 L206.43 199.8 L206.43 240.6 L208.20 240.6 L208.20 199.8 L209.98 199.8 L209.98 240.6 L211.75 240.6 L211.75 199.8 L213.53 199.8 L213.53 240.6 L215.30 240.6 L215.30 199.8 L217.08 199.8 L217.08 240.6 L218.85 240.6 L218.85 199.8 L220.63 199.8 L220.63 240.6 L222.40 240.6 L222.40 199.8 L224.18 199.8 L224.18 240.6 L225.95 240.6 L225.95 199.8 L227.73 199.8 L227.73 240.6 L229.50 240.6 L229.50 199.8 L231.28 199.8 L231.28 240.6 L233.05 240.6 L233.05 199.8 L234.83 199.8 L234.83 240.6 L236.60 240.6 L236.60 199.8 L238.38 199.8 L238.38 240.6 L241.45 240.6 L241.45 199.8 L243.23 199.8 L243.23 240.6 L245.00 240.6 L245.00 199.8 L246.78 199.8 L246.78 240.6 L248.55 240.6 L248.55 199.8 L250.33 199.8 L250.33 240.6 L252.10 240.6 L252.10 199.8 L253.88 199.8 L253.88 240.6 L255.65 240.6 L255.65 199.8 L257.43 199.8 L257.43 240.6 L259.20 240.6 L259.20 199.8 L260.98 199.8 L260.98 240.6 L262.75 240.6 L262.75 199.8 L264.53 199.8 L264.53 240.6 L266.30 240.6 L266.30 199.8 L268.08 199.8 L268.08 240.6 L269.85 240.6 L269.85 199.8 L271.63 199.8 L271.63 240.6 L273.40 240.6 L273.40 199.8 L275.18 199.8 L275.18 240.6 L276.95 240.6 L276.95 199.8 L278.73 199.8 L278.73 240.6 L280.50 240.6 L280.50 199.8 L282.28 199.8 L282.28 240.6 L284.05 240.6 L284.05 199.8 L285.83 199.8 L285.83 240.6 L287.60 240.6 L287.60 199.8 L289.38 199.8 L289.38 240.6 L291.15 240.6 L291.15 199.8 L292.92 199.8 L292.92 240.6 L294.70 240.6 L294.70 199.8 L296.47 199.8 L296.47 240.6 L298.25 240.6 L298.25 199.8 L300.02 199.8 L300.02 240.6 L301.80 240.6 L301.80 199.8 L303.57 199.8 L303.57 240.6 L305.35 240.6 L305.35 199.8 L307.12 199.8 L307.12 240.6 L308.90 240.6 L308.90 199.8 L310.67 199.8 L310.67 240.6 L312.45 240.6 L312.45 199.8 L314.22 199.8 L314.22 240.6 L316.00 240.6 L316.00 199.8 L317.77 199.8 L317.77 240.6 L319.55 240.6 L319.55 199.8 L321.32 199.8 L321.32 240.6 L323.10 240.6 L323.10 199.8 L324.87 199.8 L324.87 240.6 L326.65 240.6 L326.65 199.8 L328.00 199.8 M333.60 199.8 L335.38 199.8 L335.38 240.6 L337.15 240.6 L337.15 199.8 L338.92 199.8 L338.92 240.6 L340.70 240.6 L340.70 199.8 L342.47 199.8 L342.47 240.6 L344.25 240.6 L344.25 199.8 L346.02 199.8 L346.02 240.6 L347.80 240.6 L347.80 199.8 L349.57 199.8 L349.57 240.6 L351.35 240.6 L351.35 199.8 L353.12 199.8 L353.12 240.6 L354.90 240.6 L354.90 199.8 L356.67 199.8 L356.67 240.6 L358.45 240.6 L358.45 199.8 L360.22 199.8 L360.22 240.6 L362.00 240.6 L362.00 199.8 L363.77 199.8 L363.77 240.6 L365.55 240.6 L365.55 199.8 L367.32 199.8 L367.32 240.6 L369.10 240.6 L369.10 199.8 L370.87 199.8 L370.87 240.6 L372.65 240.6 L372.65 199.8 L374.42 199.8 L374.42 240.6 L376.20 240.6 L376.20 199.8 L377.97 199.8 L377.97 240.6 L379.75 240.6 L379.75 199.8 L381.52 199.8 L381.52 240.6 L383.30 240.6 L383.30 199.8 L385.07 199.8 L385.07 240.6 L386.85 240.6 L386.85 199.8 L388.62 199.8 L388.62 240.6 L390.40 240.6 L390.40 199.8 L392.17 199.8 L392.17 240.6 L393.95 240.6 L393.95 199.8 L395.72 199.8 L395.72 240.6 L397.50 240.6 L397.50 199.8 L399.27 199.8 L399.27 240.6 L401.05 240.6 L401.05 199.8 L402.82 199.8 L402.82 240.6 L404.60 240.6 L404.60 199.8 L406.37 199.8 L406.37 240.6 L408.15 240.6 L408.15 199.8 L409.92 199.8 L409.92 240.6 L411.70 240.6 L411.70 199.8 L413.47 199.8 L413.47 240.6 L415.25 240.6 L415.25 199.8 L417.02 199.8 L417.02 240.6 L418.80 240.6 L418.80 199.8 L420.57 199.8 L420.57 240.6 L422.35 240.6 L422.35 199.8 L424.12 199.8 L424.12 240.6 L425.90 240.6 L425.90 199.8 L427.67 199.8 L427.67 240.6 L430.75 240.6 L430.75 199.8 L432.52 199.8 L432.52 240.6 L434.30 240.6 L434.30 199.8 L436.07 199.8 L436.07 240.6 L437.85 240.6 L437.85 199.8 L439.62 199.8 L439.62 240.6 L441.40 240.6 L441.40 199.8 L443.17 199.8 L443.17 240.6 L444.95 240.6 L444.95 199.8 L446.72 199.8 L446.72 240.6 L448.50 240.6 L448.50 199.8 L450.27 199.8 L450.27 240.6 L452.05 240.6 L452.05 199.8 L453.82 199.8 L453.82 240.6 L455.60 240.6 L455.60 199.8 L457.37 199.8 L457.37 240.6 L459.15 240.6 L459.15 199.8 L460.92 199.8 L460.92 240.6 L462.70 240.6 L462.70 199.8 L464.47 199.8 L464.47 240.6 L466.25 240.6 L466.25 199.8 L468.02 199.8 L468.02 240.6 L469.80 240.6 L469.80 199.8 L471.57 199.8 L471.57 240.6 L473.35 240.6 L473.35 199.8 L475.12 199.8 L475.12 240.6 L476.90 240.6 L476.90 199.8 L478.67 199.8 L478.67 240.6 L480.45 240.6 L480.45 199.8 L482.22 199.8 L482.22 240.6 L484.00 240.6 L484.00 199.8 L485.77 199.8 L485.77 240.6 L487.55 240.6 L487.55 199.8 L489.32 199.8 L489.32 240.6 L491.10 240.6 L491.10 199.8 L492.87 199.8 L492.87 240.6 L494.65 240.6 L494.65 199.8 L496.42 199.8 L496.42 240.6 L498.20 240.6 L498.20 199.8 L499.97 199.8 L499.97 240.6 L501.75 240.6 L501.75 199.8 L503.52 199.8 L503.52 240.6 L505.30 240.6 L505.30 199.8 L507.07 199.8 L507.07 240.6 L510.15 240.6 L510.15 199.8 L511.92 199.8 L511.92 240.6 L513.70 240.6 L513.70 199.8 L515.47 199.8 L515.47 240.6 L517.25 240.6 L517.25 199.8 L519.02 199.8 L519.02 240.6 L520.80 240.6 L520.80 199.8 L522.57 199.8 L522.57 240.6 L524.35 240.6 L524.35 199.8 L526.12 199.8 L526.12 240.6 L527.90 240.6 L527.90 199.8 L529.67 199.8 L529.67 240.6 L531.45 240.6 L531.45 199.8 L533.22 199.8 L533.22 240.6 L535.00 240.6 L535.00 199.8 L536.77 199.8 L536.77 240.6 L538.55 240.6 L538.55 199.8 L539.50 199.8 M546.50 199.8 L548.27 199.8 L548.27 240.6 L550.05 240.6 L550.05 199.8 L551.82 199.8 L551.82 240.6 L553.60 240.6 L553.60 199.8 L555.37 199.8 L555.37 240.6 L557.15 240.6 L557.15 199.8 L558.92 199.8 L558.92 240.6 L560.70 240.6 L560.70 199.8 L562.47 199.8 L562.47 240.6 L564.25 240.6 L564.25 199.8 L566.02 199.8 L566.02 240.6 L567.80 240.6 L567.80 199.8 L569.57 199.8 L569.57 240.6 L571.35 240.6 L571.35 199.8 L573.12 199.8 L573.12 240.6 L574.90 240.6 L574.90 199.8 L576.67 199.8 L576.67 240.6 L578.45 240.6 L578.45 199.8 L580.22 199.8 L580.22 240.6 L582.00 240.6 L582.00 199.8 L583.77 199.8 L583.77 240.6 L585.55 240.6 L585.55 199.8 L587.32 199.8 L587.32 240.6 L590.40 240.6 L590.40 199.8 L592.17 199.8 L592.17 240.6 L593.95 240.6 L593.95 199.8 L595.72 199.8 L595.72 240.6 L597.50 240.6 L597.50 199.8 L599.27 199.8 L599.27 240.6 L601.05 240.6 L601.05 199.8 L602.82 199.8 L602.82 240.6 L604.60 240.6 L604.60 199.8 L606.37 199.8 L606.37 240.6 L608.15 240.6 L608.15 199.8 L609.92 199.8 L609.92 240.6 L611.70 240.6 L611.70 199.8 L613.47 199.8 L613.47 240.6 L615.25 240.6 L615.25 199.8 L617.02 199.8 L617.02 240.6 L618.80 240.6 L618.80 199.8 L620.57 199.8 L620.57 240.6 L622.35 240.6 L622.35 199.8 L624.12 199.8 L624.12 240.6 L625.90 240.6 L625.90 199.8 L627.67 199.8 L627.67 240.6 L629.45 240.6 L629.45 199.8 L631.22 199.8 L631.22 240.6 L633.00 240.6 L633.00 199.8 L634.77 199.8 L634.77 240.6 L636.55 240.6 L636.55 199.8 L638.32 199.8 L638.32 240.6 L640.10 240.6 L640.10 199.8 L641.87 199.8 L641.87 240.6 L643.65 240.6 L643.65 199.8 L645.42 199.8 L645.42 240.6 L647.20 240.6 L647.20 199.8 L648.97 199.8 L648.97 240.6 L650.75 240.6 L650.75 199.8 L652.52 199.8 L652.52 240.6 L654.30 240.6 L654.30 199.8 L656.07 199.8 L656.07 240.6 L657.85 240.6 L657.85 199.8 L659.62 199.8 L659.62 240.6 L661.40 240.6 L661.40 199.8 L663.17 199.8 L663.17 240.6 L666.25 240.6 L666.25 199.8 L668.02 199.8 L668.02 240.6 L669.80 240.6 L669.80 199.8 L671.57 199.8 L671.57 240.6 L673.35 240.6 L673.35 199.8 L675.12 199.8 L675.12 240.6 L676.90 240.6 L676.90 199.8 L678.67 199.8 L678.67 240.6 L680.45 240.6 L680.45 199.8 L682.22 199.8 L682.22 240.6 L684.00 240.6 L684.00 199.8 L685.77 199.8 L685.77 240.6 L687.55 240.6 L687.55 199.8 L689.32 199.8 L689.32 240.6 L691.10 240.6 L691.10 199.8 L692.87 199.8 L692.87 240.6 L694.65 240.6 L694.65 199.8 L696.42 199.8 L696.42 240.6 L698.20 240.6 L698.20 199.8 L699.97 199.8 L699.97 240.6 L701.75 240.6 L701.75 199.8 L703.52 199.8 L703.52 240.6 L705.30 240.6 L705.30 199.8 L707.07 199.8 L707.07 240.6 L708.85 240.6 L708.85 199.8 L710.62 199.8 L710.62 240.6 L712.40 240.6 L712.40 199.8 L714.17 199.8 L714.17 240.6 L715.95 240.6 L715.95 199.8 L717.72 199.8 L717.72 240.6 L719.50 240.6 L719.50 199.8 L721.27 199.8 L721.27 240.6 L723.05 240.6 L723.05 199.8 L724.82 199.8 L724.82 240.6 L726.60 240.6 L726.60 199.8 L728.37 199.8 L728.37 240.6 L730.15 240.6 L730.15 199.8 L731.92 199.8 L731.92 240.6 L733.70 240.6 L733.70 199.8 L735.47 199.8 L735.47 240.6 L737.25 240.6 L737.25 199.8 L739.02 199.8 L739.02 240.6 L740.80 240.6 L740.80 199.8 L742.57 199.8 L742.57 240.6 L744.35 240.6 L744.35 199.8 L746.12 199.8 L746.12 240.6 L747.90 240.6 L747.90 199.8 L749.67 199.8 L749.67 240.6 L750.80 240.6 M760.60 199.8 L762.38 199.8 L762.38 240.6 L764.15 240.6 L764.15 199.8 L765.92 199.8 L765.92 240.6 L767.70 240.6 L767.70 199.8 L769.47 199.8 L769.47 240.6 L771.25 240.6 L771.25 199.8 L773.02 199.8 L773.02 240.6 L774.80 240.6 L774.80 199.8 L776.57 199.8 L776.57 240.6 L778.35 240.6 L778.35 199.8 L780.12 199.8 L780.12 240.6 L781.90 240.6 L781.90 199.8 L783.67 199.8 L783.67 240.6 L785.45 240.6 L785.45 199.8 L787.22 199.8 L787.22 240.6 L789.00 240.6 L789.00 199.8 L790.77 199.8 L790.77 240.6 L792.55 240.6 L792.55 199.8 L794.32 199.8 L794.32 240.6 L796.10 240.6 L796.10 199.8 L797.87 199.8 L797.87 240.6 L799.65 240.6 L799.65 199.8 L801.42 199.8 L801.42 240.6 L803.20 240.6 L803.20 199.8 L804.97 199.8 L804.97 240.6 L806.75 240.6 L806.75 199.8 L808.52 199.8 L808.52 240.6 L810.30 240.6 L810.30 199.8 L812.07 199.8 L812.07 240.6 L813.85 240.6 L813.85 199.8 L815.62 199.8 L815.62 240.6 L817.40 240.6 L817.40 199.8 L819.17 199.8 L819.17 240.6 L820.95 240.6 L820.95 199.8 L822.72 199.8 L822.72 240.6 L824.50 240.6 L824.50 199.8 L826.27 199.8 L826.27 240.6 L828.05 240.6 L828.05 199.8 L829.82 199.8 L829.82 240.6 L832.90 240.6 L832.90 199.8 L834.67 199.8 L834.67 240.6 L836.45 240.6 L836.45 199.8 L838.22 199.8 L838.22 240.6 L840.00 240.6 L840.00 199.8 L841.77 199.8 L841.77 240.6 L843.55 240.6 L843.55 199.8 L845.32 199.8 L845.32 240.6 L847.10 240.6 L847.10 199.8 L848.87 199.8 L848.87 240.6 L850.65 240.6 L850.65 199.8 L852.42 199.8 L852.42 240.6 L854.20 240.6 L854.20 199.8 L855.97 199.8 L855.97 240.6 L857.75 240.6 L857.75 199.8 L859.52 199.8 L859.52 240.6 L861.30 240.6 L861.30 199.8 L863.07 199.8 L863.07 240.6 L864.85 240.6 L864.85 199.8 L866.62 199.8 L866.62 240.6 L868.40 240.6 L868.40 199.8 L870.17 199.8 L870.17 240.6 L871.95 240.6 L871.95 199.8 L873.72 199.8 L873.72 240.6 L875.50 240.6 L875.50 199.8 L877.27 199.8 L877.27 240.6 L879.05 240.6 L879.05 199.8 L880.82 199.8 L880.82 240.6 L882.60 240.6 L882.60 199.8 L884.37 199.8 L884.37 240.6 L886.15 240.6 L886.15 199.8 L887.92 199.8 L887.92 240.6 L889.70 240.6 L889.70 199.8 L891.47 199.8 L891.47 240.6 L893.25 240.6 L893.25 199.8 L895.02 199.8 L895.02 240.6 L896.80 240.6 L896.80 199.8 L898.57 199.8 L898.57 240.6 L900.35 240.6 L900.35 199.8 L902.12 199.8 L902.12 240.6 L903.90 240.6 L903.90 199.8 L905.67 199.8 L905.67 240.6 L908.75 240.6 L908.75 199.8 L910.52 199.8 L910.52 240.6 L912.30 240.6 L912.30 199.8 L914.07 199.8 L914.07 240.6 L915.85 240.6 L915.85 199.8 L917.62 199.8 L917.62 240.6 L919.40 240.6 L919.40 199.8 L921.17 199.8 L921.17 240.6 L922.95 240.6 L922.95 199.8 L924.72 199.8 L924.72 240.6 L926.50 240.6 L926.50 199.8 L928.27 199.8 L928.27 240.6 L930.05 240.6 L930.05 199.8 L931.82 199.8 L931.82 240.6 L933.60 240.6 L933.60 199.8 L935.37 199.8 L935.37 240.6 L937.15 240.6 L937.15 199.8 L938.92 199.8 L938.92 240.6 L940.70 240.6 L940.70 199.8 L942.47 199.8 L942.47 240.6 L944.25 240.6 L944.25 199.8 L946.02 199.8 L946.02 240.6 L947.80 240.6 L947.80 199.8 L949.57 199.8 L949.57 240.6 L951.35 240.6 L951.35 199.8 L953.12 199.8 L953.12 240.6 L954.90 240.6 L954.90 199.8 L956.67 199.8 L956.67 240.6 L958.45 240.6 L958.45 199.8 L960.22 199.8 L960.22 240.6 L962.00 240.6 L962.00 199.8 L963.77 199.8 L963.77 240.6 L965.55 240.6 L965.55 199.8 L966.50 199.8 M973.40 199.8 L975.17 199.8 L975.17 240.6 L976.95 240.6 L976.95 199.8 L978.72 199.8 L978.72 240.6 L980.50 240.6 L980.50 199.8 L982.27 199.8 L982.27 240.6 L984.05 240.6 L984.05 199.8 L985.82 199.8 L985.82 240.6 L987.60 240.6 L987.60 199.8 L989.37 199.8 L989.37 240.6 L991.15 240.6 L991.15 199.8 L992.92 199.8 L992.92 240.6 L994.70 240.6 L994.70 199.8 L995.30 199.8 " fill="none" stroke="#7e7e3c" stroke-width="0.7"/>
<path d="M91.00 199.8 L92.50 199.8 M94.55 199.8 L96.05 199.8 M98.10 199.8 L99.60 199.8 M101.65 199.8 L103.15 199.8 M105.20 199.8 L106.70 199.8 M108.75 199.8 L110.25 199.8 M121.70 199.8 L123.20 199.8 M125.25 199.8 L126.75 199.8 M128.80 199.8 L130.30 199.8 M132.35 199.8 L133.85 199.8 M135.90 199.8 L137.40 199.8 M139.45 199.8 L140.95 199.8 M143.00 199.8 L144.50 199.8 M146.55 199.8 L148.05 199.8 M150.10 199.8 L151.60 199.8 M154.95 199.8 L156.45 199.8 M158.50 199.8 L160.00 199.8 M162.05 199.8 L163.55 199.8 M165.60 199.8 L167.10 199.8 M169.15 199.8 L170.65 199.8 M172.70 199.8 L174.20 199.8 M176.25 199.8 L177.75 199.8 M179.80 199.8 L181.30 199.8 M183.35 199.8 L184.85 199.8 M186.90 199.8 L188.40 199.8 M190.45 199.8 L191.95 199.8 M194.00 199.8 L195.50 199.8 M197.55 199.8 L199.05 199.8 M201.10 199.8 L202.60 199.8 M204.65 199.8 L206.15 199.8 M208.20 199.8 L209.70 199.8 M211.75 199.8 L213.25 199.8 M215.30 199.8 L216.80 199.8 M218.85 199.8 L220.35 199.8 M222.40 199.8 L223.90 199.8 M225.95 199.8 L227.45 199.8 M229.50 199.8 L231.00 199.8 M233.05 199.8 L234.55 199.8 M236.60 199.8 L238.10 199.8 M241.45 199.8 L242.95 199.8 M245.00 199.8 L246.50 199.8 M248.55 199.8 L250.05 199.8 M252.10 199.8 L253.60 199.8 M255.65 199.8 L257.15 199.8 M259.20 199.8 L260.70 199.8 M262.75 199.8 L264.25 199.8 M266.30 199.8 L267.80 199.8 M269.85 199.8 L271.35 199.8 M273.40 199.8 L274.90 199.8 M276.95 199.8 L278.45 199.8 M280.50 199.8 L282.00 199.8 M284.05 199.8 L285.55 199.8 M287.60 199.8 L289.10 199.8 M291.15 199.8 L292.65 199.8 M294.70 199.8 L296.20 199.8 M298.25 199.8 L299.75 199.8 M301.80 199.8 L303.30 199.8 M305.35 199.8 L306.85 199.8 M308.90 199.8 L310.40 199.8 M312.45 199.8 L313.95 199.8 M316.00 199.8 L317.50 199.8 M319.55 199.8 L321.05 199.8 M323.10 199.8 L324.60 199.8 M333.60 199.8 L335.10 199.8 M337.15 199.8 L338.65 199.8 M340.70 199.8 L342.20 199.8 M344.25 199.8 L345.75 199.8 M347.80 199.8 L349.30 199.8 M351.35 199.8 L352.85 199.8 M354.90 199.8 L356.40 199.8 M358.45 199.8 L359.95 199.8 M362.00 199.8 L363.50 199.8 M365.55 199.8 L367.05 199.8 M369.10 199.8 L370.60 199.8 M372.65 199.8 L374.15 199.8 M376.20 199.8 L377.70 199.8 M379.75 199.8 L381.25 199.8 M383.30 199.8 L384.80 199.8 M386.85 199.8 L388.35 199.8 M390.40 199.8 L391.90 199.8 M393.95 199.8 L395.45 199.8 M397.50 199.8 L399.00 199.8 M401.05 199.8 L402.55 199.8 M404.60 199.8 L406.10 199.8 M408.15 199.8 L409.65 199.8 M411.70 199.8 L413.20 199.8 M415.25 199.8 L416.75 199.8 M418.80 199.8 L420.30 199.8 M422.35 199.8 L423.85 199.8 M425.90 199.8 L427.40 199.8 M430.75 199.8 L432.25 199.8 M434.30 199.8 L435.80 199.8 M437.85 199.8 L439.35 199.8 M441.40 199.8 L442.90 199.8 M444.95 199.8 L446.45 199.8 M448.50 199.8 L450.00 199.8 M452.05 199.8 L453.55 199.8 M455.60 199.8 L457.10 199.8 M459.15 199.8 L460.65 199.8 M462.70 199.8 L464.20 199.8 M466.25 199.8 L467.75 199.8 M469.80 199.8 L471.30 199.8 M473.35 199.8 L474.85 199.8 M476.90 199.8 L478.40 199.8 M480.45 199.8 L481.95 199.8 M484.00 199.8 L485.50 199.8 M487.55 199.8 L489.05 199.8 M491.10 199.8 L492.60 199.8 M494.65 199.8 L496.15 199.8 M498.20 199.8 L499.70 199.8 M501.75 199.8 L503.25 199.8 M505.30 199.8 L506.80 199.8 M510.15 199.8 L511.65 199.8 M513.70 199.8 L515.20 199.8 M517.25 199.8 L518.75 199.8 M520.80 199.8 L522.30 199.8 M524.35 199.8 L525.85 199.8 M527.90 199.8 L529.40 199.8 M531.45 199.8 L532.95 199.8 M535.00 199.8 L536.50 199.8 M546.50 199.8 L548.00 199.8 M550.05 199.8 L551.55 199.8 M553.60 199.8 L555.10 199.8 M557.15 199.8 L558.65 199.8 M560.70 199.8 L562.20 199.8 M564.25 199.8 L565.75 199.8 M567.80 199.8 L569.30 199.8 M571.35 199.8 L572.85 199.8 M574.90 199.8 L576.40 199.8 M578.45 199.8 L579.95 199.8 M582.00 199.8 L583.50 199.8 M585.55 199.8 L587.05 199.8 M590.40 199.8 L591.90 199.8 M593.95 199.8 L595.45 199.8 M597.50 199.8 L599.00 199.8 M601.05 199.8 L602.55 199.8 M604.60 199.8 L606.10 199.8 M608.15 199.8 L609.65 199.8 M611.70 199.8 L613.20 199.8 M615.25 199.8 L616.75 199.8 M618.80 199.8 L620.30 199.8 M622.35 199.8 L623.85 199.8 M625.90 199.8 L627.40 199.8 M629.45 199.8 L630.95 199.8 M633.00 199.8 L634.50 199.8 M636.55 199.8 L638.05 199.8 M640.10 199.8 L641.60 199.8 M643.65 199.8 L645.15 199.8 M647.20 199.8 L648.70 199.8 M650.75 199.8 L652.25 199.8 M654.30 199.8 L655.80 199.8 M657.85 199.8 L659.35 199.8 M661.40 199.8 L662.90 199.8 M666.25 199.8 L667.75 199.8 M669.80 199.8 L671.30 199.8 M673.35 199.8 L674.85 199.8 M676.90 199.8 L678.40 199.8 M680.45 199.8 L681.95 199.8 M684.00 199.8 L685.50 199.8 M687.55 199.8 L689.05 199.8 M691.10 199.8 L692.60 199.8 M694.65 199.8 L696.15 199.8 M698.20 199.8 L699.70 199.8 M701.75 199.8 L703.25 199.8 M705.30 199.8 L706.80 199.8 M708.85 199.8 L710.35 199.8 M712.40 199.8 L713.90 199.8 M715.95 199.8 L717.45 199.8 M719.50 199.8 L721.00 199.8 M723.05 199.8 L724.55 199.8 M726.60 199.8 L728.10 199.8 M730.15 199.8 L731.65 199.8 M733.70 199.8 L735.20 199.8 M737.25 199.8 L738.75 199.8 M740.80 199.8 L742.30 199.8 M744.35 199.8 L745.85 199.8 M747.90 199.8 L749.40 199.8 M760.60 199.8 L762.10 199.8 M764.15 199.8 L765.65 199.8 M767.70 199.8 L769.20 199.8 M771.25 199.8 L772.75 199.8 M774.80 199.8 L776.30 199.8 M778.35 199.8 L779.85 199.8 M781.90 199.8 L783.40 199.8 M785.45 199.8 L786.95 199.8 M789.00 199.8 L790.50 199.8 M792.55 199.8 L794.05 199.8 M796.10 199.8 L797.60 199.8 M799.65 199.8 L801.15 199.8 M803.20 199.8 L804.70 199.8 M806.75 199.8 L808.25 199.8 M810.30 199.8 L811.80 199.8 M813.85 199.8 L815.35 199.8 M817.40 199.8 L818.90 199.8 M820.95 199.8 L822.45 199.8 M824.50 199.8 L826.00 199.8 M828.05 199.8 L829.55 199.8 M832.90 199.8 L834.40 199.8 M836.45 199.8 L837.95 199.8 M840.00 199.8 L841.50 199.8 M843.55 199.8 L845.05 199.8 M847.10 199.8 L848.60 199.8 M850.65 199.8 L852.15 199.8 M854.20 199.8 L855.70 199.8 M857.75 199.8 L859.25 199.8 M861.30 199.8 L862.80 199.8 M864.85 199.8 L866.35 199.8 M868.40 199.8 L869.90 199.8 M871.95 199.8 L873.45 199.8 M875.50 199.8 L877.00 199.8 M879.05 199.8 L880.55 199.8 M882.60 199.8 L884.10 199.8 M886.15 199.8 L887.65 199.8 M889.70 199.8 L891.20 199.8 M893.25 199.8 L894.75 199.8 M896.80 199.8 L898.30 199.8 M900.35 199.8 L901.85 199.8 M903.90 199.8 L905.40 199.8 M908.75 199.8 L910.25 199.8 M912.30 199.8 L913.80 199.8 M915.85 199.8 L917.35 199.8 M919.40 199.8 L920.90 199.8 M922.95 199.8 L924.45 199.8 M926.50 199.8 L928.00 199.8 M930.05 199.8 L931.55 199.8 M933.60 199.8 L935.10 199.8 M937.15 199.8 L938.65 199.8 M940.70 199.8 L942.20 199.8 M944.25 199.8 L945.75 199.8 M947.80 199.8 L949.30 199.8 M951.35 199.8 L952.85 199.8 M954.90 199.8 L956.40 199.8 M958.45 199.8 L959.95 199.8 M962.00 199.8 L963.50 199.8 M973.40 199.8 L974.90 199.8 M976.95 199.8 L978.45 199.8 M980.50 199.8 L982.00 199.8 M984.05 199.8 L985.55 199.8 M987.60 199.8 L989.10 199.8 M991.15 199.8 L992.65 199.8 " fill="none" stroke="#6a6a30" stroke-width="1.8"/>
<path d="M92.78 240.6 L94.28 240.6 M96.33 240.6 L97.83 240.6 M99.88 240.6 L101.38 240.6 M103.43 240.6 L104.93 240.6 M106.98 240.6 L108.48 240.6 M110.53 240.6 L112.03 240.6 M123.48 240.6 L124.98 240.6 M127.03 240.6 L128.53 240.6 M130.58 240.6 L132.08 240.6 M134.13 240.6 L135.63 240.6 M137.68 240.6 L139.18 240.6 M141.23 240.6 L142.73 240.6 M144.78 240.6 L146.28 240.6 M148.33 240.6 L149.83 240.6 M151.88 240.6 L153.38 240.6 M156.73 240.6 L158.23 240.6 M160.28 240.6 L161.78 240.6 M163.83 240.6 L165.33 240.6 M167.38 240.6 L168.88 240.6 M170.93 240.6 L172.43 240.6 M174.48 240.6 L175.98 240.6 M178.03 240.6 L179.53 240.6 M181.58 240.6 L183.08 240.6 M185.13 240.6 L186.63 240.6 M188.68 240.6 L190.18 240.6 M192.23 240.6 L193.73 240.6 M195.78 240.6 L197.28 240.6 M199.33 240.6 L200.83 240.6 M202.88 240.6 L204.38 240.6 M206.43 240.6 L207.93 240.6 M209.98 240.6 L211.48 240.6 M213.53 240.6 L215.03 240.6 M217.08 240.6 L218.58 240.6 M220.63 240.6 L222.13 240.6 M224.18 240.6 L225.68 240.6 M227.73 240.6 L229.23 240.6 M231.28 240.6 L232.78 240.6 M234.83 240.6 L236.33 240.6 M238.38 240.6 L239.88 240.6 M243.23 240.6 L244.73 240.6 M246.78 240.6 L248.28 240.6 M250.33 240.6 L251.83 240.6 M253.88 240.6 L255.38 240.6 M257.43 240.6 L258.93 240.6 M260.98 240.6 L262.48 240.6 M264.53 240.6 L266.03 240.6 M268.08 240.6 L269.58 240.6 M271.63 240.6 L273.13 240.6 M275.18 240.6 L276.68 240.6 M278.73 240.6 L280.23 240.6 M282.28 240.6 L283.78 240.6 M285.83 240.6 L287.33 240.6 M289.38 240.6 L290.88 240.6 M292.92 240.6 L294.42 240.6 M296.47 240.6 L297.97 240.6 M300.02 240.6 L301.52 240.6 M303.57 240.6 L305.07 240.6 M307.12 240.6 L308.62 240.6 M310.67 240.6 L312.17 240.6 M314.22 240.6 L315.72 240.6 M317.77 240.6 L319.27 240.6 M321.32 240.6 L322.82 240.6 M324.87 240.6 L326.37 240.6 M335.38 240.6 L336.88 240.6 M338.92 240.6 L340.42 240.6 M342.47 240.6 L343.97 240.6 M346.02 240.6 L347.52 240.6 M349.57 240.6 L351.07 240.6 M353.12 240.6 L354.62 240.6 M356.67 240.6 L358.17 240.6 M360.22 240.6 L361.72 240.6 M363.77 240.6 L365.27 240.6 M367.32 240.6 L368.82 240.6 M370.87 240.6 L372.37 240.6 M374.42 240.6 L375.92 240.6 M377.97 240.6 L379.47 240.6 M381.52 240.6 L383.02 240.6 M385.07 240.6 L386.57 240.6 M388.62 240.6 L390.12 240.6 M392.17 240.6 L393.67 240.6 M395.72 240.6 L397.22 240.6 M399.27 240.6 L400.77 240.6 M402.82 240.6 L404.32 240.6 M406.37 240.6 L407.87 240.6 M409.92 240.6 L411.42 240.6 M413.47 240.6 L414.97 240.6 M417.02 240.6 L418.52 240.6 M420.57 240.6 L422.07 240.6 M424.12 240.6 L425.62 240.6 M427.67 240.6 L429.17 240.6 M432.52 240.6 L434.02 240.6 M436.07 240.6 L437.57 240.6 M439.62 240.6 L441.12 240.6 M443.17 240.6 L444.67 240.6 M446.72 240.6 L448.22 240.6 M450.27 240.6 L451.77 240.6 M453.82 240.6 L455.32 240.6 M457.37 240.6 L458.87 240.6 M460.92 240.6 L462.42 240.6 M464.47 240.6 L465.97 240.6 M468.02 240.6 L469.52 240.6 M471.57 240.6 L473.07 240.6 M475.12 240.6 L476.62 240.6 M478.67 240.6 L480.17 240.6 M482.22 240.6 L483.72 240.6 M485.77 240.6 L487.27 240.6 M489.32 240.6 L490.82 240.6 M492.87 240.6 L494.37 240.6 M496.42 240.6 L497.92 240.6 M499.97 240.6 L501.47 240.6 M503.52 240.6 L505.02 240.6 M507.07 240.6 L508.57 240.6 M511.92 240.6 L513.42 240.6 M515.47 240.6 L516.97 240.6 M519.02 240.6 L520.52 240.6 M522.57 240.6 L524.07 240.6 M526.12 240.6 L527.62 240.6 M529.67 240.6 L531.17 240.6 M533.22 240.6 L534.72 240.6 M536.77 240.6 L538.27 240.6 M548.27 240.6 L549.77 240.6 M551.82 240.6 L553.32 240.6 M555.37 240.6 L556.87 240.6 M558.92 240.6 L560.42 240.6 M562.47 240.6 L563.97 240.6 M566.02 240.6 L567.52 240.6 M569.57 240.6 L571.07 240.6 M573.12 240.6 L574.62 240.6 M576.67 240.6 L578.17 240.6 M580.22 240.6 L581.72 240.6 M583.77 240.6 L585.27 240.6 M587.32 240.6 L588.82 240.6 M592.17 240.6 L593.67 240.6 M595.72 240.6 L597.22 240.6 M599.27 240.6 L600.77 240.6 M602.82 240.6 L604.32 240.6 M606.37 240.6 L607.87 240.6 M609.92 240.6 L611.42 240.6 M613.47 240.6 L614.97 240.6 M617.02 240.6 L618.52 240.6 M620.57 240.6 L622.07 240.6 M624.12 240.6 L625.62 240.6 M627.67 240.6 L629.17 240.6 M631.22 240.6 L632.72 240.6 M634.77 240.6 L636.27 240.6 M638.32 240.6 L639.82 240.6 M641.87 240.6 L643.37 240.6 M645.42 240.6 L646.92 240.6 M648.97 240.6 L650.47 240.6 M652.52 240.6 L654.02 240.6 M656.07 240.6 L657.57 240.6 M659.62 240.6 L661.12 240.6 M663.17 240.6 L664.67 240.6 M668.02 240.6 L669.52 240.6 M671.57 240.6 L673.07 240.6 M675.12 240.6 L676.62 240.6 M678.67 240.6 L680.17 240.6 M682.22 240.6 L683.72 240.6 M685.77 240.6 L687.27 240.6 M689.32 240.6 L690.82 240.6 M692.87 240.6 L694.37 240.6 M696.42 240.6 L697.92 240.6 M699.97 240.6 L701.47 240.6 M703.52 240.6 L705.02 240.6 M707.07 240.6 L708.57 240.6 M710.62 240.6 L712.12 240.6 M714.17 240.6 L715.67 240.6 M717.72 240.6 L719.22 240.6 M721.27 240.6 L722.77 240.6 M724.82 240.6 L726.32 240.6 M728.37 240.6 L729.87 240.6 M731.92 240.6 L733.42 240.6 M735.47 240.6 L736.97 240.6 M739.02 240.6 L740.52 240.6 M742.57 240.6 L744.07 240.6 M746.12 240.6 L747.62 240.6 M762.38 240.6 L763.88 240.6 M765.92 240.6 L767.42 240.6 M769.47 240.6 L770.97 240.6 M773.02 240.6 L774.52 240.6 M776.57 240.6 L778.07 240.6 M780.12 240.6 L781.62 240.6 M783.67 240.6 L785.17 240.6 M787.22 240.6 L788.72 240.6 M790.77 240.6 L792.27 240.6 M794.32 240.6 L795.82 240.6 M797.87 240.6 L799.37 240.6 M801.42 240.6 L802.92 240.6 M804.97 240.6 L806.47 240.6 M808.52 240.6 L810.02 240.6 M812.07 240.6 L813.57 240.6 M815.62 240.6 L817.12 240.6 M819.17 240.6 L820.67 240.6 M822.72 240.6 L824.22 240.6 M826.27 240.6 L827.77 240.6 M829.82 240.6 L831.32 240.6 M834.67 240.6 L836.17 240.6 M838.22 240.6 L839.72 240.6 M841.77 240.6 L843.27 240.6 M845.32 240.6 L846.82 240.6 M848.87 240.6 L850.37 240.6 M852.42 240.6 L853.92 240.6 M855.97 240.6 L857.47 240.6 M859.52 240.6 L861.02 240.6 M863.07 240.6 L864.57 240.6 M866.62 240.6 L868.12 240.6 M870.17 240.6 L871.67 240.6 M873.72 240.6 L875.22 240.6 M877.27 240.6 L878.77 240.6 M880.82 240.6 L882.32 240.6 M884.37 240.6 L885.87 240.6 M887.92 240.6 L889.42 240.6 M891.47 240.6 L892.97 240.6 M895.02 240.6 L896.52 240.6 M898.57 240.6 L900.07 240.6 M902.12 240.6 L903.62 240.6 M905.67 240.6 L907.17 240.6 M910.52 240.6 L912.02 240.6 M914.07 240.6 L915.57 240.6 M917.62 240.6 L919.12 240.6 M921.17 240.6 L922.67 240.6 M924.72 240.6 L926.22 240.6 M928.27 240.6 L929.77 240.6 M931.82 240.6 L933.32 240.6 M935.37 240.6 L936.87 240.6 M938.92 240.6 L940.42 240.6 M942.47 240.6 L943.97 240.6 M946.02 240.6 L947.52 240.6 M949.57 240.6 L951.07 240.6 M953.12 240.6 L954.62 240.6 M956.67 240.6 L958.17 240.6 M960.22 240.6 L961.72 240.6 M963.77 240.6 L965.27 240.6 M975.17 240.6 L976.67 240.6 M978.72 240.6 L980.22 240.6 M982.27 240.6 L983.77 240.6 M985.82 240.6 L987.32 240.6 M989.37 240.6 L990.87 240.6 M992.92 240.6 L994.42 240.6 " fill="none" stroke="#6a6a30" stroke-width="1.8"/>
<path d="M113.5 240.6 L121.7 240.6" stroke="#7c7c3a" stroke-width="2"/>
<path d="M328 240.6 L333.6 240.6" stroke="#7c7c3a" stroke-width="2"/>
<path d="M539.5 240.6 L546.5 240.6" stroke="#7c7c3a" stroke-width="2"/>
<path d="M750.8 240.6 L760.6 240.6" stroke="#7c7c3a" stroke-width="2"/>
<path d="M966.5 240.6 L973.4 240.6" stroke="#7c7c3a" stroke-width="2"/>
<rect x="0" y="524" width="1000" height="16" fill="#ece9d8"/>
<rect x="0" y="524.5" width="1000" height="1" fill="#f8f7f2"/>
<text transform="translate(0.83 536.20) scale(0.9091 1)" font-size="8.8" font-weight="normal" font-style="normal" fill="#333" >X</text>
<path d="M11.5 538.5 L11.5 527.5 L154.5 527.5" fill="none" stroke="#b4b1a2" stroke-width="1"/>
<path d="M154.5 527.5 L154.5 538.5 L11.5 538.5" fill="none" stroke="#f6f5ee" stroke-width="1"/>
<text transform="translate(159.03 536.20) scale(0.9091 1)" font-size="8.8" font-weight="normal" font-style="normal" fill="#333" >Y</text>
<path d="M168.5 538.5 L168.5 527.5 L278.5 527.5" fill="none" stroke="#b4b1a2" stroke-width="1"/>
<path d="M278.5 527.5 L278.5 538.5 L168.5 538.5" fill="none" stroke="#f6f5ee" stroke-width="1"/>
<text transform="translate(281.47 535.80) scale(0.9676 1)" font-size="9" font-weight="normal" font-style="normal" fill="#1e1e1e" >Цена деления</text>
<path d="M344.0 538.5 L344.0 527.5 L384.5 527.5" fill="none" stroke="#b4b1a2" stroke-width="1"/>
<path d="M384.5 527.5 L384.5 538.5 L344.0 538.5" fill="none" stroke="#f6f5ee" stroke-width="1"/>
<text transform="translate(344.81 535.80) scale(0.8629 1)" font-size="9" font-weight="normal" font-style="normal" fill="#1e1e1e" >10 мс</text>
<path d="M386.0 538.5 L386.0 527.5 L417.5 527.5" fill="none" stroke="#b4b1a2" stroke-width="1"/>
<path d="M417.5 527.5 L417.5 538.5 L386.0 538.5" fill="none" stroke="#f6f5ee" stroke-width="1"/>
<path d="M418.7 538.5 L418.7 527.5 L999.5 527.5" fill="none" stroke="#b4b1a2" stroke-width="1"/>
<path d="M999.5 527.5 L999.5 538.5 L418.7 538.5" fill="none" stroke="#f6f5ee" stroke-width="1"/>
<text transform="translate(419.27 535.80) scale(0.9715 1)" font-size="9" font-weight="normal" font-style="normal" fill="#1e1e1e" >ВАЗ 1111 (2ц. 1-2 с двухвыводными катушками)</text>
<rect x="0" y="539.5" width="1000" height="23.5" fill="url(#gTask)"/>
<path d="M0 540 L66 540 Q76 540 76 551.5 Q76 563 66 563 L0 563Z" fill="url(#gStart)"/>
<rect x="0" y="540" width="1" height="23" fill="#2a6a2a"/>
<g transform="translate(8.8 544)"><path d="M1 1.2 Q3.5 0 6.4 1 L5.8 6.2 Q3 5.2 0.4 6.2Z" fill="#f07a30"/><path d="M7.4 1.2 Q10 0 13 1 L12.4 6.2 Q9.6 5.4 6.8 6.4Z" fill="#7ac030"/><path d="M0.3 7.2 Q3 6.2 5.7 7.2 L5.1 12.4 Q2.5 11.4 -0.3 12.4Z" fill="#4a88e8"/><path d="M6.7 7.4 Q9.5 6.4 12.3 7.2 L11.8 12.6 Q9 11.6 6.1 12.6Z" fill="#f0c830"/></g>
<text transform="translate(26.98 555.20) scale(0.8649 1)" font-size="14.4" font-weight="bold" font-style="italic" fill="#ffffff" style="paint-order:stroke" stroke="#2a6a2a" stroke-width="0.4">пуск</text>
<rect x="81" y="542.8" width="124.5" height="17.6" rx="2.5" fill="#1c4ab8"/>
<rect x="81.5" y="543.3" width="123.5" height="1" fill="#163c9c"/>
<g transform="translate(89.6 546.6)"><path d="M5 0 L10 10 L0 10Z" fill="#b8d0f8"/><path d="M5 3 L8 9 L2 9Z" fill="#3a6ad0"/><path d="M0.5 7 Q5 4 9.5 7" fill="none" stroke="#e8f0ff" stroke-width="1"/></g>
<text transform="translate(104.20 555.60) scale(0.9192 1)" font-size="9.2" font-weight="normal" font-style="normal" fill="#ffffff" >Осциллограф 1 (ОС...</text>
<rect x="206" y="542.8" width="124" height="16.8" rx="2.5" fill="#3c80f2"/>
<rect x="206.5" y="543.2" width="123" height="1" fill="#5a98f8"/>
<g transform="translate(214.8 545)"><path d="M1 2 L8 1 L9 9 Q5 12 1 9Z" fill="#e0a030"/><path d="M3 4 L7 4 L7 8 L3 8Z" fill="#d04040"/><path d="M2 1 L4 0 L5 3" fill="none" stroke="#303080" stroke-width="1"/></g>
<text transform="translate(227.81 554.80) scale(0.9370 1)" font-size="9.2" font-weight="normal" font-style="normal" fill="#ffffff" >киа - Paint</text>
<text transform="translate(856.84 555.60) scale(1.0159 1)" font-size="9.2" font-weight="normal" font-style="normal" fill="#ffffff" >RU</text>
<rect x="885.5" y="540" width="114.5" height="23" fill="url(#gTray)"/>
<rect x="885" y="540" width="1" height="23" fill="#0a3c98"/>
<rect x="896" y="545.5" width="8" height="6.5" fill="#d8e0e8"/><rect x="897" y="546.5" width="6" height="4.5" fill="#203048"/><rect x="894" y="550" width="6" height="5" fill="#c8d0d8"/><rect x="895" y="551" width="4" height="3" fill="#1a2838"/>
<rect x="911" y="545.5" width="7" height="11" rx="1.5" fill="#1a2aa0"/><rect x="912" y="546" width="2" height="9" fill="#4a6ae0"/>
<rect x="922.5" y="547" width="8" height="6" fill="#d0d8e0"/><rect x="923.5" y="548" width="6" height="4" fill="#1a2838"/><circle cx="929.5" cy="554" r="2.2" fill="#c82020"/><path d="M931 546 Q934 549 931 552 M933 545 Q937 549 933 553" fill="none" stroke="#e8f0f8" stroke-width="0.8"/>
<circle cx="942" cy="550.5" r="4.5" fill="#e8b060"/><path d="M939 548 L944 553 M944 547 L940 552" stroke="#a04020" stroke-width="1"/>
<rect x="951.5" y="545.5" width="11" height="11" fill="#2a5ab0" stroke="#d0e0f8" stroke-width="0.8"/><circle cx="957" cy="551" r="2.5" fill="#5a9ae0"/>
<text transform="translate(967.54 554.80) scale(0.9600 1)" font-size="9.2" font-weight="normal" font-style="normal" fill="#ffffff" >19:33</text>
</svg></body></html>
